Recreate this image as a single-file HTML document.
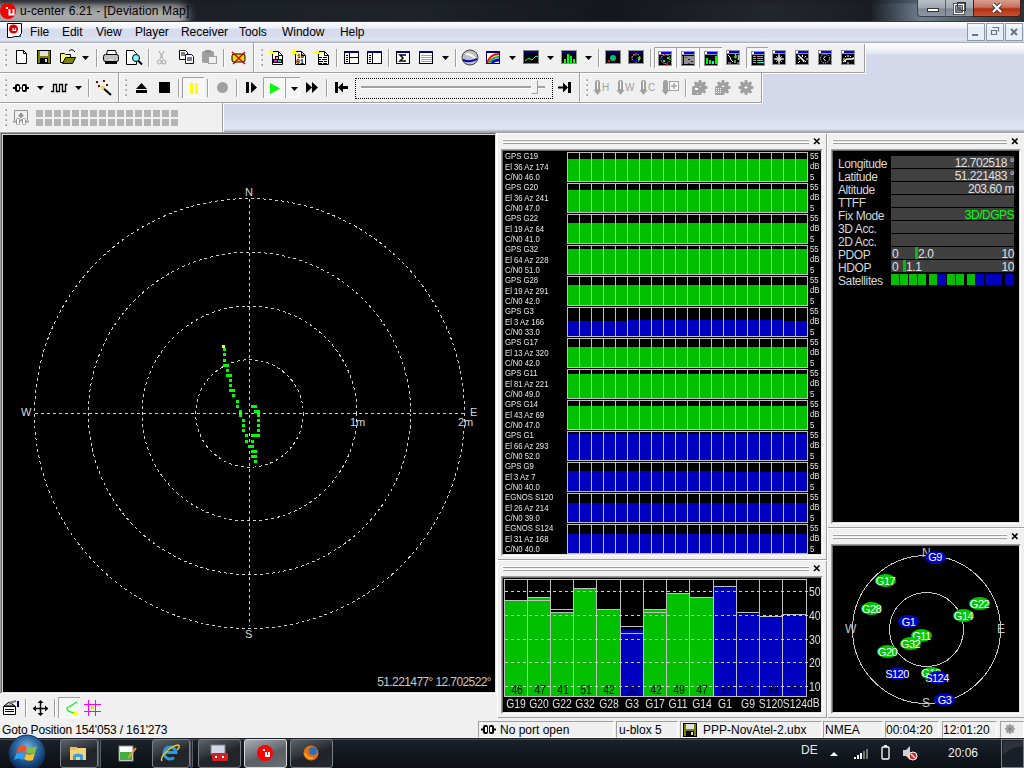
<!DOCTYPE html><html><head><meta charset="utf-8"><style>
*{margin:0;padding:0;box-sizing:border-box}
html,body{width:1024px;height:768px;overflow:hidden;background:#d3d9eb;font-family:"Liberation Sans",sans-serif;position:relative}
.a{position:absolute}
svg{position:absolute;left:0;top:0;overflow:visible}
</style></head><body>
<div class="a" style="left:0;top:0;width:1024px;height:22px;overflow:hidden;background:linear-gradient(90deg,#1a1e24 0%,#1e2329 40%,#14181e 60%,#22272d 75%,#1a1e24 85%,#6f7f90 90%,#2a3038 100%)">
<div class="a" style="left:-20px;top:4px;width:208px;height:24px;border-radius:12px;background:#a8a8a8;filter:blur(5px)"></div>
<div class="a" style="left:0;top:0;width:1024px;height:3px;background:rgba(20,24,30,0.35);filter:blur(1px)"></div>
</div>
<div class="a" style="left:0;top:21px;width:1024px;height:1px;background:#3b3b3b"></div>
<svg width="30" height="30"><circle cx="8" cy="11" r="8" fill="#f00000"/><rect x="6" y="7" width="2" height="2" fill="#fff"/><path d="M9.5 9v5.5h4V9" fill="none" stroke="#fff" stroke-width="2"/></svg>
<div class="a" style="left:20px;top:3px;font:12px/16px 'Liberation Sans',sans-serif;color:#000;white-space:nowrap;letter-spacing:0.15px">u-center 6.21 - [Deviation Map]</div>
<div class="a" style="left:917px;top:0;width:57px;height:17px;border:1px solid #3c4048;border-top:none;border-radius:0 0 0 4px;background:linear-gradient(#b9bfc7 0%,#9ea6b0 50%,#7f8994 55%,#8e98a3 100%)"></div>
<div class="a" style="left:945px;top:0;width:1px;height:17px;background:#5a6068"></div>
<div class="a" style="left:973px;top:0;width:48px;height:17px;border:1px solid #3c2020;border-top:none;border-radius:0 0 4px 0;background:linear-gradient(#d9a090 0%,#c87060 45%,#b03010 55%,#c85030 100%)"></div>
<svg width="1024" height="768">
<rect x="927.5" y="8.5" width="11" height="3" fill="#fff" stroke="#333"/>
<rect x="954.5" y="4.5" width="9" height="9" fill="none" stroke="#333" stroke-width="3"/><rect x="954.5" y="4.5" width="9" height="9" fill="none" stroke="#fff" stroke-width="1.4"/>
<rect x="957.5" y="2.5" width="8" height="8" fill="none" stroke="#333" stroke-width="1"/>
<rect x="957" y="7" width="4" height="4" fill="#5a6470"/>
<path d="M993 4l8 8M1001 4l-8 8" stroke="#3a3a3a" stroke-width="4"/><path d="M993 4l8 8M1001 4l-8 8" stroke="#fff" stroke-width="2.2"/>
</svg>
<div class="a" style="left:0;top:22px;width:1024px;height:20px;background:linear-gradient(#fbfcfe 0px,#eef1f8 6px,#d6dbed 7px,#d8ddef 15px,#e0e5f3 18px,#c8ccd8 20px)"></div>
<div class="a" style="left:0;top:42px;width:1024px;height:1px;background:#a9adb5"></div>
<div class="a" style="left:30px;top:24px;font:12px/16px 'Liberation Sans',sans-serif;color:#000;letter-spacing:-0.05px">File</div><div class="a" style="left:62px;top:24px;font:12px/16px 'Liberation Sans',sans-serif;color:#000;letter-spacing:-0.05px">Edit</div><div class="a" style="left:96px;top:24px;font:12px/16px 'Liberation Sans',sans-serif;color:#000;letter-spacing:-0.05px">View</div><div class="a" style="left:135px;top:24px;font:12px/16px 'Liberation Sans',sans-serif;color:#000;letter-spacing:-0.05px">Player</div><div class="a" style="left:181px;top:24px;font:12px/16px 'Liberation Sans',sans-serif;color:#000;letter-spacing:-0.05px">Receiver</div><div class="a" style="left:239px;top:24px;font:12px/16px 'Liberation Sans',sans-serif;color:#000;letter-spacing:-0.05px">Tools</div><div class="a" style="left:282px;top:24px;font:12px/16px 'Liberation Sans',sans-serif;color:#000;letter-spacing:-0.05px">Window</div><div class="a" style="left:340px;top:24px;font:12px/16px 'Liberation Sans',sans-serif;color:#000;letter-spacing:-0.05px">Help</div><svg width="1024" height="768"><path d="M7.5 23.5h14v10l-3 3h-4l-3 1h-4z" fill="#fff" stroke="#000"/><path d="M9 26h11M9 28h11M9 30h11M9 32h11" stroke="#e0e0e0"/><circle cx="13.5" cy="29" r="4.5" fill="#e00000"/><path d="M13 28v2.5h2.5V28" fill="none" stroke="#fff" stroke-width="1.2"/><rect x="19" y="35" width="2" height="2" fill="#008080"/></svg><svg width="1024" height="768">
<g fill="#e6eef8" stroke="#8c9aa8"><rect x="967.5" y="23.5" width="17" height="17"/><rect x="986.5" y="23.5" width="17" height="17"/><rect x="1005.5" y="23.5" width="17" height="17"/></g>
<g fill="#f4f8fc"><rect x="968" y="24" width="16" height="3"/><rect x="987" y="24" width="16" height="3"/><rect x="1006" y="24" width="16" height="3"/></g>
<rect x="972" y="34" width="6" height="2" fill="#6a7480"/>
<path d="M992.5 27.5h6v4M991.5 30.5h5v4h-5z" fill="none" stroke="#6a7480" stroke-width="1.2"/>
<path d="M1011 29l6 6M1017 29l-6 6" stroke="#6a7480" stroke-width="2"/>
</svg><div class="a" style="left:0;top:43px;width:1024px;height:89px;background:linear-gradient(#ffffff 0px,#e6e9f3 10px,#d3d9eb 12px,#d3d9eb 72px,#e0e5f3 86px,#b8bdcc 88px,#a0a0a0 89px)"></div>
<div class="a" style="left:0;top:132px;width:1024px;height:1px;background:#a0a0a0"></div>
<div class="a" style="left:0px;top:43px;width:865px;height:30px;background:#f0f0f0;border-right:1px solid #a0a0a0;border-bottom:1px solid #a0a0a0;box-shadow:1px 1px 0 #fff"></div><div class="a" style="left:0px;top:73px;width:119px;height:30px;background:#f0f0f0;border-right:1px solid #a0a0a0;border-bottom:1px solid #a0a0a0;box-shadow:1px 1px 0 #fff"></div><div class="a" style="left:119px;top:73px;width:643px;height:30px;background:#f0f0f0;border-right:1px solid #a0a0a0;border-bottom:1px solid #a0a0a0;box-shadow:1px 1px 0 #fff"></div><div class="a" style="left:0;top:103px;width:223px;height:28px;background:#f0f0f0;border-right:1px solid #a0a0a0"></div><div class="a" style="left:0;top:131px;width:223px;height:1px;background:#f8f8f8"></div><div class="a" style="left:0px;top:43px;width:865px;height:1px;background:#fff"></div><div class="a" style="left:0px;top:73px;width:762px;height:1px;background:#fff"></div><div class="a" style="left:0px;top:103px;width:222px;height:1px;background:#fff"></div><svg width="1024" height="768"><rect x="4" y="50" width="2" height="2" fill="#fff"/><rect x="5" y="49" width="2" height="2" fill="#a8a8a8"/><rect x="5" y="49" width="1" height="1" fill="#d0d0d0"/><rect x="4" y="55" width="2" height="2" fill="#fff"/><rect x="5" y="54" width="2" height="2" fill="#a8a8a8"/><rect x="5" y="54" width="1" height="1" fill="#d0d0d0"/><rect x="4" y="60" width="2" height="2" fill="#fff"/><rect x="5" y="59" width="2" height="2" fill="#a8a8a8"/><rect x="5" y="59" width="1" height="1" fill="#d0d0d0"/><rect x="4" y="65" width="2" height="2" fill="#fff"/><rect x="5" y="64" width="2" height="2" fill="#a8a8a8"/><rect x="5" y="64" width="1" height="1" fill="#d0d0d0"/><rect x="4" y="68" width="2" height="1" fill="#fff"/><path d="M16.5 50.5h7l3 3v10h-10z" fill="#fff" stroke="#000"/><path d="M23.5 50.5v3h3" fill="none" stroke="#000"/><rect x="37" y="50" width="14" height="14" fill="#000"/><rect x="38" y="51" width="12" height="12" fill="#808000"/><rect x="40" y="51" width="8" height="5" fill="#e0e0e0"/><rect x="40" y="58" width="8" height="5" fill="#000"/><rect x="45" y="59" width="2" height="3" fill="#e0e0e0"/><path d="M60.5 53.5h4l1 1h5v8h-10z" fill="#ffff80" stroke="#000"/><path d="M62.5 63.5l3-6h10l-3 6z" fill="#808000" stroke="#000"/><path d="M69 51q3-3 6 1" fill="none" stroke="#000"/><path d="M82 56h7l-3.5 4z" fill="#000"/><rect x="96" y="49" width="1" height="18" fill="#a0a0a0"/><rect x="97" y="49" width="1" height="18" fill="#fff"/><path d="M107.5 50.5h8l1 4h-10z" fill="#fff" stroke="#000"/><rect x="103.5" y="54.5" width="15" height="7" rx="2" fill="#c0c0c0" stroke="#000"/><rect x="105" y="61" width="12" height="3" fill="#000"/><rect x="109" y="59" width="4" height="1" fill="#ff0"/><path d="M126.5 50.5h7l3 3v11h-10z" fill="#fff" stroke="#000"/><circle cx="136" cy="58" r="3.5" fill="#80ffff" stroke="#000"/><path d="M138 60.5l4 4" stroke="#000" stroke-width="2"/><rect x="148" y="49" width="1" height="18" fill="#a0a0a0"/><rect x="149" y="49" width="1" height="18" fill="#fff"/><path d="M159 51l4 8M164 51l-4 8" stroke="#a0a0a0" fill="none"/><circle cx="159.5" cy="62" r="2" fill="none" stroke="#a0a0a0"/><circle cx="164" cy="62" r="2" fill="none" stroke="#a0a0a0"/><path d="M179.5 50.5h6l2 2v7h-8z" fill="#fff" stroke="#000"/><path d="M185.5 54.5h6l2 2v7h-8z" fill="#fff" stroke="#000080"/><path d="M187 58h5M187 60h5M181 53h4M181 55h4" stroke="#000"/><rect x="202" y="51" width="12" height="12" rx="2" fill="#a0a0a0"/><rect x="205" y="50" width="6" height="3" fill="#909090"/><rect x="208.5" y="56.5" width="8" height="7" fill="#f0f0f0" stroke="#a0a0a0"/><rect x="223" y="49" width="1" height="18" fill="#a0a0a0"/><rect x="224" y="49" width="1" height="18" fill="#fff"/><rect x="232" y="54" width="13" height="8" rx="2" fill="#e0e000" stroke="#000"/><path d="M232 52l13 12M245 52l-12 12" stroke="#e00000" stroke-width="1.5"/><rect x="253" y="43" width="1" height="29" fill="#a0a0a0"/><rect x="254" y="43" width="1" height="29" fill="#fff"/><rect x="260" y="50" width="2" height="2" fill="#fff"/><rect x="261" y="49" width="2" height="2" fill="#a8a8a8"/><rect x="261" y="49" width="1" height="1" fill="#d0d0d0"/><rect x="260" y="55" width="2" height="2" fill="#fff"/><rect x="261" y="54" width="2" height="2" fill="#a8a8a8"/><rect x="261" y="54" width="1" height="1" fill="#d0d0d0"/><rect x="260" y="60" width="2" height="2" fill="#fff"/><rect x="261" y="59" width="2" height="2" fill="#a8a8a8"/><rect x="261" y="59" width="1" height="1" fill="#d0d0d0"/><rect x="260" y="65" width="2" height="2" fill="#fff"/><rect x="261" y="64" width="2" height="2" fill="#a8a8a8"/><rect x="261" y="64" width="1" height="1" fill="#d0d0d0"/><rect x="260" y="68" width="2" height="1" fill="#fff"/><path d="M272.5 51.5h6l4 4v9h-10z" fill="#fff" stroke="#000"/><path d="M278.5 51.5v4h4" fill="none" stroke="#000"/><path d="M269.5 50.5l4 4M273.5 50.5l-4 4M268 52.5h7M271.5 49v7" stroke="#ffff00" stroke-width="1"/><path d="M295.5 51.5h6l4 4v9h-10z" fill="#fff" stroke="#000"/><path d="M301.5 51.5v4h4" fill="none" stroke="#000"/><path d="M292.5 50.5l4 4M296.5 50.5l-4 4M291 52.5h7M294.5 49v7" stroke="#ffff00" stroke-width="1"/><path d="M318.5 51.5h6l4 4v9h-10z" fill="#fff" stroke="#000"/><path d="M324.5 51.5v4h4" fill="none" stroke="#000"/><path d="M315.5 50.5l4 4M319.5 50.5l-4 4M314 52.5h7M317.5 49v7" stroke="#ffff00" stroke-width="1"/><rect x="275.5" y="56.5" width="3" height="3" fill="#e0c000" stroke="#000"/><rect x="273.5" y="59.5" width="4" height="3" fill="#ff00ff" stroke="#000"/><rect x="277.5" y="59.5" width="4" height="3" fill="#00c0c0" stroke="#000"/><text x="297" y="58" font-family="Liberation Mono" font-size="6" font-weight="bold" fill="#000">10</text><text x="296" y="63.5" font-family="Liberation Mono" font-size="6.5" font-weight="bold" fill="#000">01</text><path d="M319 57.5h3M323 57.5h4M319 59.5h2M322 59.5h5M319 61.5h4M324 61.5h3M319 63.5h3M323 63.5h4" stroke="#000"/><rect x="336" y="49" width="1" height="18" fill="#a0a0a0"/><rect x="337" y="49" width="1" height="18" fill="#fff"/><rect x="344.5" y="51.5" width="14" height="12" fill="#fff" stroke="#000"/><rect x="345" y="51" width="14" height="2" fill="#000080"/><path d="M349.5 53v10M349.5 57.5h9" stroke="#000"/><path d="M346 55.5h2M346 57.5h2M346 59.5h2M346 61.5h2" stroke="#000"/><rect x="367.5" y="51.5" width="14" height="12" fill="#fff" stroke="#000"/><rect x="368" y="51" width="14" height="2" fill="#000080"/><path d="M372.5 53v10" stroke="#000"/><path d="M369 55.5h2M369 57.5h2M369 59.5h2M369 61.5h2" stroke="#000"/><rect x="388" y="49" width="1" height="18" fill="#a0a0a0"/><rect x="389" y="49" width="1" height="18" fill="#fff"/><rect x="396.5" y="51.5" width="13" height="12" fill="#fff" stroke="#000"/><rect x="397" y="51" width="13" height="2" fill="#000080"/><path d="M406 55h-6l3 3l-3 3h6" fill="none" stroke="#000" stroke-width="1.5"/><rect x="419.5" y="51.5" width="13" height="12" fill="#fff" stroke="#000"/><rect x="420" y="51" width="13" height="2" fill="#000080"/><path d="M421 55.5h11M421 57.5h11M421 59.5h11M421 61.5h11" stroke="#a0a0a0"/><path d="M442 56h7l-3.5 4z" fill="#000"/><rect x="455" y="49" width="1" height="18" fill="#a0a0a0"/><rect x="456" y="49" width="1" height="18" fill="#fff"/><ellipse cx="470" cy="57.5" rx="8" ry="7.5" fill="#c0c0c0" stroke="#404040"/><path d="M463 60q7 3 14-1" stroke="#0000c0" stroke-width="2" fill="none"/><path d="M466 54q5 0 9 4" stroke="#fff" stroke-width="2" fill="none"/><rect x="486" y="51" width="14" height="13" fill="#000080"/><rect x="487" y="53" width="12" height="10" fill="#fff"/><path d="M487 63q3-9 12-9" stroke="#ff0000" stroke-width="2" fill="none"/><path d="M489 63q3-6 10-6" stroke="#00c000" stroke-width="2" fill="none"/><path d="M492 63q2-3 7-3" stroke="#0000ff" stroke-width="3" fill="none"/><path d="M509 56h7l-3.5 4z" fill="#000"/><rect x="523" y="50" width="16" height="14" fill="#808080"/><rect x="524" y="51" width="14" height="12" fill="#000"/><rect x="524" y="51" width="14" height="2" fill="#000080"/><path d="M525 61l4-3l3 2l4-4l2 1" stroke="#00ff80" fill="none"/><path d="M547 56h7l-3.5 4z" fill="#000"/><rect x="561" y="50" width="16" height="14" fill="#909090"/><rect x="562" y="51" width="14" height="12" fill="#000"/><rect x="562" y="51" width="14" height="2" fill="#000080"/><rect x="564" y="59" width="2" height="4" fill="#00ff00"/><rect x="567" y="54" width="2" height="9" fill="#00ff00"/><rect x="570" y="56" width="2" height="7" fill="#00ff00"/><rect x="573" y="59" width="2" height="4" fill="#00ff00"/><path d="M585 56h7l-3.5 4z" fill="#000"/><rect x="598" y="49" width="1" height="18" fill="#a0a0a0"/><rect x="599" y="49" width="1" height="18" fill="#fff"/><rect x="605" y="50" width="16" height="14" fill="#909090"/><rect x="606" y="51" width="14" height="12" fill="#000"/><rect x="606" y="51" width="14" height="2" fill="#000080"/><circle cx="613" cy="58" r="3" fill="#00c080"/><rect x="608" y="60" width="2" height="2" fill="#ff0000"/><rect x="628" y="50" width="16" height="14" fill="#909090"/><rect x="629" y="51" width="14" height="12" fill="#000"/><rect x="629" y="51" width="14" height="2" fill="#000080"/><circle cx="636" cy="58" r="4" fill="none" stroke="#fff" stroke-dasharray="1.5 1"/><rect x="634" y="54" width="2" height="2" fill="#f00"/><rect x="633" y="60" width="4" height="2" fill="#00f"/><rect x="638" y="57" width="2" height="3" fill="#0f0"/><rect x="650" y="49" width="1" height="18" fill="#a0a0a0"/><rect x="651" y="49" width="1" height="18" fill="#fff"/><rect x="654.5" y="47.5" width="21" height="20" fill="#f6f6f6" stroke="#fff"/><path d="M654.5 68V47.5H676" fill="none" stroke="#a0a0a0"/><rect x="676.5" y="47.5" width="22" height="20" fill="#f6f6f6" stroke="#fff"/><path d="M676.5 68V47.5H699" fill="none" stroke="#a0a0a0"/><rect x="699.5" y="47.5" width="22" height="20" fill="#f6f6f6" stroke="#fff"/><path d="M699.5 68V47.5H722" fill="none" stroke="#a0a0a0"/><rect x="658" y="51" width="14" height="15" fill="#909090"/><rect x="659" y="52" width="12" height="13" fill="#000"/><rect x="659" y="52" width="2" height="2" fill="#fff"/><rect x="661" y="52" width="10" height="2" fill="#0000ff"/><rect x="659" y="54" width="12" height="1" fill="#909090"/><circle cx="665.5" cy="59" r="4.5" fill="none" stroke="#fff" stroke-dasharray="1 1"/><rect x="664" y="54" width="2" height="2" fill="#f00"/><rect x="666" y="63" width="2" height="2" fill="#f00"/><rect x="661" y="58" width="2" height="2" fill="#00f"/><rect x="667" y="57" width="2" height="2" fill="#0f0"/><rect x="663" y="60" width="2" height="2" fill="#0f0"/><rect x="681" y="51" width="14" height="15" fill="#909090"/><rect x="682" y="52" width="12" height="13" fill="#000"/><rect x="682" y="52" width="2" height="2" fill="#fff"/><rect x="684" y="52" width="10" height="2" fill="#0000ff"/><rect x="682" y="54" width="12" height="1" fill="#909090"/><rect x="684" y="56" width="10" height="8" fill="#909090"/><path d="M682 57h1M682 59h1M682 61h1M682 63h1" stroke="#fff"/><rect x="685" y="57" width="2" height="1" fill="#f00"/><rect x="688" y="57" width="2" height="1" fill="#0f0"/><rect x="691" y="57" width="2" height="1" fill="#0f0"/><rect x="685" y="59" width="2" height="1" fill="#0f0"/><rect x="688" y="59" width="2" height="1" fill="#00f"/><rect x="691" y="59" width="2" height="1" fill="#0f0"/><rect x="685" y="61" width="2" height="1" fill="#0f0"/><rect x="688" y="61" width="2" height="1" fill="#0f0"/><rect x="691" y="61" width="2" height="1" fill="#00f"/><rect x="688" y="63" width="2" height="1" fill="#f00"/><rect x="704" y="51" width="14" height="15" fill="#909090"/><rect x="705" y="52" width="12" height="13" fill="#000"/><rect x="705" y="52" width="2" height="2" fill="#fff"/><rect x="707" y="52" width="10" height="2" fill="#0000ff"/><rect x="705" y="54" width="12" height="1" fill="#909090"/><rect x="706" y="58" width="2" height="6" fill="#00ff00"/><rect x="709" y="60" width="2" height="4" fill="#00ff00"/><rect x="712" y="61" width="2" height="3" fill="#00ffff"/><rect x="715" y="56" width="2" height="8" fill="#00ff00"/><rect x="726" y="50" width="14" height="15" fill="#909090"/><rect x="727" y="51" width="12" height="13" fill="#000"/><rect x="727" y="51" width="2" height="2" fill="#fff"/><rect x="729" y="51" width="10" height="2" fill="#0000ff"/><rect x="727" y="53" width="12" height="1" fill="#909090"/><path d="M728 55l2 2l1 3l2 2M735 54l1 2M738 55l1 2l-1 3" stroke="#fff" fill="none"/><path d="M734 57h3M735.5 55.5v3" stroke="#0f0" stroke-width="1.5"/><path d="M735 60v3" stroke="#fff"/><path d="M728 63h3M737 63h3" stroke="#c0c0c0"/><rect x="746.5" y="47.5" width="21" height="20" fill="#f6f6f6" stroke="#fff"/><path d="M746.5 68V47.5H768" fill="none" stroke="#a0a0a0"/><rect x="751" y="51" width="14" height="15" fill="#909090"/><rect x="752" y="52" width="12" height="13" fill="#000"/><rect x="752" y="52" width="2" height="2" fill="#fff"/><rect x="754" y="52" width="10" height="2" fill="#0000ff"/><rect x="752" y="54" width="12" height="1" fill="#909090"/><path d="M753 56.5h3M757 56.5h6M753 58.5h3M757 58.5h6M753 60.5h3M757 60.5h6M753 62.5h3" stroke="#a0a0a0"/><path d="M757 62.5h3" stroke="#00ff00"/><path d="M760 62.5h4" stroke="#00ffff"/><rect x="772" y="50" width="14" height="15" fill="#909090"/><rect x="773" y="51" width="12" height="13" fill="#000"/><rect x="773" y="51" width="2" height="2" fill="#fff"/><rect x="775" y="51" width="10" height="2" fill="#0000ff"/><rect x="773" y="53" width="12" height="1" fill="#909090"/><path d="M779 54l1 4l4 1l-4 1l-1 4l-1-4l-4-1l4-1z" fill="#c0c0c0" stroke="#e0e0e0" stroke-width="0.7"/><path d="M776 56l6 6M782 56l-6 6" stroke="#e0e0e0" stroke-width="0.8"/><rect x="795" y="50" width="14" height="15" fill="#909090"/><rect x="796" y="51" width="12" height="13" fill="#000"/><rect x="796" y="51" width="2" height="2" fill="#fff"/><rect x="798" y="51" width="10" height="2" fill="#0000ff"/><rect x="796" y="53" width="12" height="1" fill="#909090"/><path d="M798 55l5 5l1 2" stroke="#fff" stroke-width="1.5" fill="none"/><path d="M802.5 55v2M806 56l-1.5 1.5M806 59h2M806 62l-1.5-1.5M798 59h2M798 63l2-2" stroke="#fff"/><rect x="818" y="50" width="14" height="15" fill="#909090"/><rect x="819" y="51" width="12" height="13" fill="#000"/><rect x="819" y="51" width="2" height="2" fill="#fff"/><rect x="821" y="51" width="10" height="2" fill="#0000ff"/><rect x="819" y="53" width="12" height="1" fill="#909090"/><circle cx="825" cy="58.5" r="4.5" fill="none" stroke="#fff" stroke-dasharray="1 1"/><path d="M825.5 56l-2 2.5l2 2.5" stroke="#fff" fill="none"/><rect x="841" y="50" width="14" height="15" fill="#909090"/><rect x="842" y="51" width="12" height="13" fill="#000"/><rect x="842" y="51" width="2" height="2" fill="#fff"/><rect x="844" y="51" width="10" height="2" fill="#0000ff"/><rect x="842" y="53" width="12" height="1" fill="#909090"/><path d="M843 62l4-3h5l2-1" stroke="#fff" stroke-width="1.5" fill="none"/><path d="M848 55v2M845 56l1 1M851 56l-1 1M843 59h2M848 62v2M845 62l1-1" stroke="#fff"/><rect x="4" y="80" width="2" height="2" fill="#fff"/><rect x="5" y="79" width="2" height="2" fill="#a8a8a8"/><rect x="5" y="79" width="1" height="1" fill="#d0d0d0"/><rect x="4" y="85" width="2" height="2" fill="#fff"/><rect x="5" y="84" width="2" height="2" fill="#a8a8a8"/><rect x="5" y="84" width="1" height="1" fill="#d0d0d0"/><rect x="4" y="90" width="2" height="2" fill="#fff"/><rect x="5" y="89" width="2" height="2" fill="#a8a8a8"/><rect x="5" y="89" width="1" height="1" fill="#d0d0d0"/><rect x="4" y="95" width="2" height="2" fill="#fff"/><rect x="5" y="94" width="2" height="2" fill="#a8a8a8"/><rect x="5" y="94" width="1" height="1" fill="#d0d0d0"/><rect x="4" y="98" width="2" height="1" fill="#fff"/><path d="M13 88h2M27 88h2" stroke="#000" stroke-width="2"/><rect x="15" y="84" width="5" height="8" rx="2" fill="#000"/><rect x="22" y="84" width="5" height="8" rx="2" fill="#000"/><rect x="17" y="86" width="2" height="4" fill="#fff"/><rect x="23" y="86" width="2" height="4" fill="#fff"/><path d="M20 88h2" stroke="#000"/><path d="M37 86h7l-3.5 4z" fill="#000"/><path d="M51 91.5h2.5v-7h3v7h3v-7h3v7h3v-7h2" fill="none" stroke="#000" stroke-width="1.3"/><path d="M75 86h7l-3.5 4z" fill="#000"/><rect x="88" y="79" width="1" height="18" fill="#a0a0a0"/><rect x="89" y="79" width="1" height="18" fill="#fff"/><path d="M102 87l9 8" stroke="#000" stroke-width="2"/><path d="M102 87l2 2" stroke="#ff0" stroke-width="2"/><rect x="96" y="81" width="2" height="2" fill="#800000"/><rect x="103" y="80" width="2" height="2" fill="#800000"/><rect x="98" y="85" width="2" height="2" fill="#800000"/><rect x="106" y="84" width="2" height="2" fill="#800000"/><rect x="118" y="73" width="1" height="29" fill="#a0a0a0"/><rect x="119" y="73" width="1" height="29" fill="#fff"/><rect x="124" y="80" width="2" height="2" fill="#fff"/><rect x="125" y="79" width="2" height="2" fill="#a8a8a8"/><rect x="125" y="79" width="1" height="1" fill="#d0d0d0"/><rect x="124" y="85" width="2" height="2" fill="#fff"/><rect x="125" y="84" width="2" height="2" fill="#a8a8a8"/><rect x="125" y="84" width="1" height="1" fill="#d0d0d0"/><rect x="124" y="90" width="2" height="2" fill="#fff"/><rect x="125" y="89" width="2" height="2" fill="#a8a8a8"/><rect x="125" y="89" width="1" height="1" fill="#d0d0d0"/><rect x="124" y="95" width="2" height="2" fill="#fff"/><rect x="125" y="94" width="2" height="2" fill="#a8a8a8"/><rect x="125" y="94" width="1" height="1" fill="#d0d0d0"/><rect x="124" y="98" width="2" height="1" fill="#fff"/><path d="M136 89l5.5-6l5.5 6z" fill="#000"/><rect x="136" y="90" width="11" height="3" fill="#000"/><rect x="159" y="82" width="11" height="11" fill="#000"/><rect x="178" y="79" width="1" height="18" fill="#a0a0a0"/><rect x="179" y="79" width="1" height="18" fill="#fff"/><rect x="182.5" y="77.5" width="21" height="20" fill="#f6f6f6" stroke="#fff"/><path d="M182.5 98V77.5H204" fill="none" stroke="#a0a0a0"/><rect x="190" y="83" width="3" height="11" fill="#ffff00"/><rect x="195" y="83" width="3" height="11" fill="#ffff00"/><rect x="207" y="79" width="1" height="18" fill="#a0a0a0"/><rect x="208" y="79" width="1" height="18" fill="#fff"/><circle cx="222.5" cy="87.5" r="5.5" fill="#a0a0a0"/><rect x="236" y="79" width="1" height="18" fill="#a0a0a0"/><rect x="237" y="79" width="1" height="18" fill="#fff"/><rect x="246" y="82" width="3" height="11" fill="#000"/><path d="M251 82l6 5.5l-6 5.5z" fill="#000"/><rect x="263.5" y="77.5" width="21" height="20" fill="#f6f6f6" stroke="#fff"/><path d="M263.5 98V77.5H285" fill="none" stroke="#a0a0a0"/><rect x="285.5" y="77.5" width="14" height="20" fill="#f6f6f6" stroke="#fff"/><path d="M285.5 98V77.5H300" fill="none" stroke="#a0a0a0"/><path d="M270 83l10 5.5l-10 5.5z" fill="#00ff00"/><path d="M291 87h7l-3.5 4z" fill="#000"/><path d="M306 82l6 5.5l-6 5.5zM312 82l6 5.5l-6 5.5z" fill="#000"/><rect x="326" y="79" width="1" height="18" fill="#a0a0a0"/><rect x="327" y="79" width="1" height="18" fill="#fff"/><rect x="335" y="82" width="3" height="11" fill="#000"/><path d="M338 87.5l5-5v3.5h5v3h-5v3.5z" fill="#000"/><rect x="361" y="86" width="184" height="2" fill="#a0a0a0"/><rect x="361" y="88" width="184" height="1" fill="#fff"/><rect x="531.5" y="80.5" width="6" height="13" fill="#f0f0f0" stroke="#a0a0a0"/><path d="M531.5 93.5V80.5h6" stroke="#fff" fill="none"/><path d="M571 82v11h-3zM558 86.5h5v-4l5 5l-5 5v-4h-5z" fill="#000"/><rect x="568" y="82" width="3" height="11" fill="#000"/><rect x="579" y="73" width="1" height="29" fill="#a0a0a0"/><rect x="580" y="73" width="1" height="29" fill="#fff"/><rect x="585" y="80" width="2" height="2" fill="#fff"/><rect x="586" y="79" width="2" height="2" fill="#a8a8a8"/><rect x="586" y="79" width="1" height="1" fill="#d0d0d0"/><rect x="585" y="85" width="2" height="2" fill="#fff"/><rect x="586" y="84" width="2" height="2" fill="#a8a8a8"/><rect x="586" y="84" width="1" height="1" fill="#d0d0d0"/><rect x="585" y="90" width="2" height="2" fill="#fff"/><rect x="586" y="89" width="2" height="2" fill="#a8a8a8"/><rect x="586" y="89" width="1" height="1" fill="#d0d0d0"/><rect x="585" y="95" width="2" height="2" fill="#fff"/><rect x="586" y="94" width="2" height="2" fill="#a8a8a8"/><rect x="586" y="94" width="1" height="1" fill="#d0d0d0"/><rect x="585" y="98" width="2" height="1" fill="#fff"/><rect x="595" y="80" width="5" height="12" rx="2.5" fill="#a0a0a0"/><rect x="597" y="81" width="1" height="8" fill="#fff"/><path d="M593.5 90h8l-4 5z" fill="#a0a0a0"/><text x="602" y="91" font-family="Liberation Sans" font-size="10" fill="#a0a0a0">H</text><rect x="618" y="80" width="5" height="12" rx="2.5" fill="#a0a0a0"/><rect x="620" y="81" width="1" height="8" fill="#fff"/><path d="M616.5 90h8l-4 5z" fill="#a0a0a0"/><text x="625" y="91" font-family="Liberation Sans" font-size="10" fill="#a0a0a0">W</text><rect x="641" y="80" width="5" height="12" rx="2.5" fill="#a0a0a0"/><rect x="643" y="81" width="1" height="8" fill="#fff"/><path d="M639.5 90h8l-4 5z" fill="#a0a0a0"/><text x="648" y="91" font-family="Liberation Sans" font-size="10" fill="#a0a0a0">C</text><rect x="663" y="80" width="5" height="12" rx="2.5" fill="#a0a0a0"/><path d="M661.5 90h8l-4 5z" fill="#a0a0a0"/><rect x="669.5" y="81.5" width="9" height="9" fill="#fff" stroke="#a0a0a0"/><path d="M674 83v6M671 86h6" stroke="#a0a0a0" stroke-width="1.5"/><rect x="685" y="79" width="1" height="18" fill="#a0a0a0"/><rect x="686" y="79" width="1" height="18" fill="#fff"/><circle cx="700" cy="87.5" r="5.5" fill="#a0a0a0"/><rect x="698.5" y="80.0" width="3" height="3.5" rx="1" fill="#a0a0a0" transform="rotate(0 700 87.5)"/><rect x="698.5" y="80.0" width="3" height="3.5" rx="1" fill="#a0a0a0" transform="rotate(45 700 87.5)"/><rect x="698.5" y="80.0" width="3" height="3.5" rx="1" fill="#a0a0a0" transform="rotate(90 700 87.5)"/><rect x="698.5" y="80.0" width="3" height="3.5" rx="1" fill="#a0a0a0" transform="rotate(135 700 87.5)"/><rect x="698.5" y="80.0" width="3" height="3.5" rx="1" fill="#a0a0a0" transform="rotate(180 700 87.5)"/><rect x="698.5" y="80.0" width="3" height="3.5" rx="1" fill="#a0a0a0" transform="rotate(225 700 87.5)"/><rect x="698.5" y="80.0" width="3" height="3.5" rx="1" fill="#a0a0a0" transform="rotate(270 700 87.5)"/><rect x="698.5" y="80.0" width="3" height="3.5" rx="1" fill="#a0a0a0" transform="rotate(315 700 87.5)"/><circle cx="723" cy="87.5" r="5.5" fill="#a0a0a0"/><rect x="721.5" y="80.0" width="3" height="3.5" rx="1" fill="#a0a0a0" transform="rotate(0 723 87.5)"/><rect x="721.5" y="80.0" width="3" height="3.5" rx="1" fill="#a0a0a0" transform="rotate(45 723 87.5)"/><rect x="721.5" y="80.0" width="3" height="3.5" rx="1" fill="#a0a0a0" transform="rotate(90 723 87.5)"/><rect x="721.5" y="80.0" width="3" height="3.5" rx="1" fill="#a0a0a0" transform="rotate(135 723 87.5)"/><rect x="721.5" y="80.0" width="3" height="3.5" rx="1" fill="#a0a0a0" transform="rotate(180 723 87.5)"/><rect x="721.5" y="80.0" width="3" height="3.5" rx="1" fill="#a0a0a0" transform="rotate(225 723 87.5)"/><rect x="721.5" y="80.0" width="3" height="3.5" rx="1" fill="#a0a0a0" transform="rotate(270 723 87.5)"/><rect x="721.5" y="80.0" width="3" height="3.5" rx="1" fill="#a0a0a0" transform="rotate(315 723 87.5)"/><circle cx="746" cy="87.5" r="5.5" fill="#a0a0a0"/><rect x="744.5" y="80.0" width="3" height="3.5" rx="1" fill="#a0a0a0" transform="rotate(0 746 87.5)"/><rect x="744.5" y="80.0" width="3" height="3.5" rx="1" fill="#a0a0a0" transform="rotate(45 746 87.5)"/><rect x="744.5" y="80.0" width="3" height="3.5" rx="1" fill="#a0a0a0" transform="rotate(90 746 87.5)"/><rect x="744.5" y="80.0" width="3" height="3.5" rx="1" fill="#a0a0a0" transform="rotate(135 746 87.5)"/><rect x="744.5" y="80.0" width="3" height="3.5" rx="1" fill="#a0a0a0" transform="rotate(180 746 87.5)"/><rect x="744.5" y="80.0" width="3" height="3.5" rx="1" fill="#a0a0a0" transform="rotate(225 746 87.5)"/><rect x="744.5" y="80.0" width="3" height="3.5" rx="1" fill="#a0a0a0" transform="rotate(270 746 87.5)"/><rect x="744.5" y="80.0" width="3" height="3.5" rx="1" fill="#a0a0a0" transform="rotate(315 746 87.5)"/><rect x="692" y="87" width="8" height="8" fill="#a0a0a0"/><rect x="695" y="88" width="3" height="2" fill="#fff"/><rect x="697" y="93" width="1" height="1" fill="#fff"/><rect x="700" y="86" width="1" height="1" fill="#fff"/><rect x="715" y="87" width="8" height="8" fill="#a0a0a0"/><path d="M716 88.5h6M716 90.5h6M716 92.5h6" stroke="#fff" stroke-dasharray="1 1"/><path d="M723 85l1.5 2h-3z" fill="#fff"/><path d="M746 86v3M744.5 87.5h3" stroke="#fff"/><rect x="761" y="73" width="1" height="29" fill="#a0a0a0"/><rect x="762" y="73" width="1" height="29" fill="#fff"/><rect x="4" y="110" width="2" height="2" fill="#fff"/><rect x="5" y="109" width="2" height="2" fill="#a8a8a8"/><rect x="5" y="109" width="1" height="1" fill="#d0d0d0"/><rect x="4" y="115" width="2" height="2" fill="#fff"/><rect x="5" y="114" width="2" height="2" fill="#a8a8a8"/><rect x="5" y="114" width="1" height="1" fill="#d0d0d0"/><rect x="4" y="120" width="2" height="2" fill="#fff"/><rect x="5" y="119" width="2" height="2" fill="#a8a8a8"/><rect x="5" y="119" width="1" height="1" fill="#d0d0d0"/><rect x="4" y="125" width="2" height="2" fill="#fff"/><rect x="5" y="124" width="2" height="2" fill="#a8a8a8"/><rect x="5" y="124" width="1" height="1" fill="#d0d0d0"/><rect x="4" y="128" width="2" height="1" fill="#fff"/><path d="M14.5 120v-9.5h13v9.5" fill="none" stroke="#909090"/><path d="M21 113v5M18.5 115.5h5" stroke="#909090" stroke-width="2"/><path d="M13 121.5h3M26 121.5h3M19 121.5l3-2" stroke="#a0a0a0" stroke-width="2"/><rect x="16.5" y="118.5" width="3" height="6" rx="1" fill="#fff" stroke="#909090"/><rect x="22.5" y="118.5" width="3" height="6" rx="1" fill="#fff" stroke="#909090"/><rect x="36" y="110" width="7" height="7" fill="#b4b4b4"/><rect x="45" y="110" width="7" height="7" fill="#b4b4b4"/><rect x="54" y="110" width="7" height="7" fill="#b4b4b4"/><rect x="63" y="110" width="7" height="7" fill="#b4b4b4"/><rect x="72" y="110" width="7" height="7" fill="#b4b4b4"/><rect x="81" y="110" width="7" height="7" fill="#b4b4b4"/><rect x="90" y="110" width="7" height="7" fill="#b4b4b4"/><rect x="99" y="110" width="7" height="7" fill="#b4b4b4"/><rect x="108" y="110" width="7" height="7" fill="#b4b4b4"/><rect x="117" y="110" width="7" height="7" fill="#b4b4b4"/><rect x="126" y="110" width="7" height="7" fill="#b4b4b4"/><rect x="135" y="110" width="7" height="7" fill="#b4b4b4"/><rect x="144" y="110" width="7" height="7" fill="#b4b4b4"/><rect x="153" y="110" width="7" height="7" fill="#b4b4b4"/><rect x="162" y="110" width="7" height="7" fill="#b4b4b4"/><rect x="171" y="110" width="7" height="7" fill="#b4b4b4"/><rect x="36" y="119" width="7" height="7" fill="#b4b4b4"/><rect x="45" y="119" width="7" height="7" fill="#b4b4b4"/><rect x="54" y="119" width="7" height="7" fill="#b4b4b4"/><rect x="63" y="119" width="7" height="7" fill="#b4b4b4"/><rect x="72" y="119" width="7" height="7" fill="#b4b4b4"/><rect x="81" y="119" width="7" height="7" fill="#b4b4b4"/><rect x="90" y="119" width="7" height="7" fill="#b4b4b4"/><rect x="99" y="119" width="7" height="7" fill="#b4b4b4"/><rect x="108" y="119" width="7" height="7" fill="#b4b4b4"/><rect x="117" y="119" width="7" height="7" fill="#b4b4b4"/><rect x="126" y="119" width="7" height="7" fill="#b4b4b4"/><rect x="135" y="119" width="7" height="7" fill="#b4b4b4"/><rect x="144" y="119" width="7" height="7" fill="#b4b4b4"/><rect x="153" y="119" width="7" height="7" fill="#b4b4b4"/><rect x="162" y="119" width="7" height="7" fill="#b4b4b4"/><rect x="171" y="119" width="7" height="7" fill="#b4b4b4"/><rect x="222" y="103" width="1" height="29" fill="#a0a0a0"/><rect x="223" y="103" width="1" height="29" fill="#fff"/></svg><div class="a" style="left:355px;top:78px;width:198px;height:21px;border:1px dotted #000"></div><div class="a" style="left:0;top:133px;width:497px;height:585px;background:#f0f0f0"></div>
<div class="a" style="left:0;top:132px;width:497px;height:562px;border-top:1px solid #a0a0a0;border-left:1px solid #a0a0a0;border-right:1px solid #fff;border-bottom:1px solid #fff"></div>
<div class="a" style="left:1px;top:133px;width:495px;height:560px;border-top:1px solid #696969;border-left:1px solid #696969;border-right:1px solid #e3e3e3;border-bottom:1px solid #e3e3e3;background:#000"></div>
<div class="a" style="left:2px;top:134px;width:1px;height:558px;background:#d4d4d4"></div>
<div class="a" style="left:2px;top:134px;width:493px;height:1px;background:#d4d4d4"></div>
<svg width="1024" height="768" style="left:0;top:0"><g fill="none" stroke="#d0d0d0" stroke-width="1" stroke-dasharray="3 3" shape-rendering="crispEdges"><circle cx="249.5" cy="413.5" r="53.75"/><circle cx="249.5" cy="413.5" r="107.5"/><circle cx="249.5" cy="413.5" r="161.25"/><circle cx="249.5" cy="413.5" r="215.0"/><line x1="34.5" y1="413.5" x2="464.5" y2="413.5"/><line x1="249.5" y1="198.5" x2="249.5" y2="625.5"/></g></svg><div class="a" style="left:245px;top:186px;font:11px/12px 'Liberation Sans',sans-serif;color:#d8d8d8">N</div><div class="a" style="left:21px;top:406px;font:11px/12px 'Liberation Sans',sans-serif;color:#d8d8d8">W</div><div class="a" style="left:470px;top:406px;font:11px/12px 'Liberation Sans',sans-serif;color:#d8d8d8">E</div><div class="a" style="left:245px;top:628px;font:11px/12px 'Liberation Sans',sans-serif;color:#d8d8d8">S</div><div class="a" style="left:350px;top:416px;font:11px/12px 'Liberation Sans',sans-serif;color:#d8d8d8">1m</div><div class="a" style="left:458px;top:416px;font:11px/12px 'Liberation Sans',sans-serif;color:#d8d8d8">2m</div><svg width="1024" height="768"><rect x="223" y="348" width="3" height="3" fill="#00ff00"/><rect x="223" y="353" width="3" height="3" fill="#00ff00"/><rect x="223" y="359" width="3" height="3" fill="#00ff00"/><rect x="223" y="364" width="6" height="3" fill="#00ff00"/><rect x="226" y="369" width="3" height="3" fill="#00ff00"/><rect x="226" y="374" width="6" height="3" fill="#00ff00"/><rect x="229" y="379" width="3" height="3" fill="#00ff00"/><rect x="229" y="384" width="3" height="3" fill="#00ff00"/><rect x="229" y="389" width="6" height="3" fill="#00ff00"/><rect x="232" y="394" width="3" height="3" fill="#00ff00"/><rect x="236" y="400" width="3" height="3" fill="#00ff00"/><rect x="236" y="405" width="3" height="3" fill="#00ff00"/><rect x="239" y="410" width="3" height="3" fill="#00ff00"/><rect x="239" y="414" width="3" height="3" fill="#00ff00"/><rect x="242" y="419" width="3" height="3" fill="#00ff00"/><rect x="242" y="424" width="3" height="3" fill="#00ff00"/><rect x="242" y="429" width="3" height="3" fill="#00ff00"/><rect x="245" y="434" width="3" height="3" fill="#00ff00"/><rect x="245" y="440" width="3" height="3" fill="#00ff00"/><rect x="248" y="445" width="6" height="3" fill="#00ff00"/><rect x="251" y="450" width="6" height="3" fill="#00ff00"/><rect x="251" y="455" width="6" height="3" fill="#00ff00"/><rect x="254" y="460" width="3" height="3" fill="#00ff00"/><rect x="251" y="405" width="6" height="3" fill="#00ff00"/><rect x="254" y="410" width="6" height="3" fill="#00ff00"/><rect x="257" y="414" width="3" height="3" fill="#00ff00"/><rect x="257" y="419" width="3" height="3" fill="#00ff00"/><rect x="257" y="424" width="3" height="3" fill="#00ff00"/><rect x="257" y="429" width="3" height="3" fill="#00ff00"/><rect x="251" y="434" width="9" height="3" fill="#00ff00"/><rect x="251" y="440" width="3" height="3" fill="#00ff00"/><rect x="222" y="345" width="3" height="3" fill="#ffff00"/></svg><div class="a" style="left:291px;top:675px;width:200px;text-align:right;font:12px/14px 'Liberation Sans',sans-serif;color:#c8c8c8;white-space:nowrap;letter-spacing:-0.6px">51.221477° 12.702522°</div><div class="a" style="left:0;top:718px;width:1024px;height:20px;background:#f0f0f0"></div><div class="a" style="left:2px;top:723px;font:12px/14px 'Liberation Sans',sans-serif;color:#000;white-space:nowrap;letter-spacing:-0.15px">Goto Position 154'053 / 161'273</div><div class="a" style="left:478px;top:721px;width:136px;height:17px;border-top:1px solid #a0a0a0;border-left:1px solid #a0a0a0;border-right:1px solid #fff;border-bottom:1px solid #fff"></div><div class="a" style="left:500px;top:723px;font:12px/15px 'Liberation Sans',sans-serif;color:#000;white-space:nowrap">No port open</div><div class="a" style="left:616px;top:721px;width:62px;height:17px;border-top:1px solid #a0a0a0;border-left:1px solid #a0a0a0;border-right:1px solid #fff;border-bottom:1px solid #fff"></div><div class="a" style="left:619px;top:723px;font:12px/15px 'Liberation Sans',sans-serif;color:#000;white-space:nowrap">u-blox 5</div><div class="a" style="left:680px;top:721px;width:142px;height:17px;border-top:1px solid #a0a0a0;border-left:1px solid #a0a0a0;border-right:1px solid #fff;border-bottom:1px solid #fff"></div><div class="a" style="left:703px;top:723px;font:12px/15px 'Liberation Sans',sans-serif;color:#000;white-space:nowrap">PPP-NovAtel-2.ubx</div><div class="a" style="left:823px;top:721px;width:60px;height:17px;border-top:1px solid #a0a0a0;border-left:1px solid #a0a0a0;border-right:1px solid #fff;border-bottom:1px solid #fff"></div><div class="a" style="left:825px;top:723px;font:12px/15px 'Liberation Sans',sans-serif;color:#000;white-space:nowrap">NMEA</div><div class="a" style="left:885px;top:721px;width:54px;height:17px;border-top:1px solid #a0a0a0;border-left:1px solid #a0a0a0;border-right:1px solid #fff;border-bottom:1px solid #fff"></div><div class="a" style="left:886px;top:723px;font:12px/15px 'Liberation Sans',sans-serif;color:#000;white-space:nowrap">00:04:20</div><div class="a" style="left:942px;top:721px;width:55px;height:17px;border-top:1px solid #a0a0a0;border-left:1px solid #a0a0a0;border-right:1px solid #fff;border-bottom:1px solid #fff"></div><div class="a" style="left:943px;top:723px;font:12px/15px 'Liberation Sans',sans-serif;color:#000;white-space:nowrap">12:01:20</div><div class="a" style="left:1000px;top:721px;width:24px;height:17px;border-top:1px solid #a0a0a0;border-left:1px solid #a0a0a0;border-right:1px solid #fff;border-bottom:1px solid #fff"></div><div class="a" style="left:497px;top:133px;width:527px;height:585px;background:#f0f0f0"></div><div class="a" style="left:497px;top:133px;width:330px;height:1px;background:#fff"></div><div class="a" style="left:497px;top:133px;width:1px;height:426px;background:#fff"></div><div class="a" style="left:826px;top:134px;width:1px;height:425px;background:#a0a0a0"></div><div class="a" style="left:498px;top:559px;width:329px;height:1px;background:#a0a0a0"></div><div class="a" style="left:497px;top:560px;width:330px;height:1px;background:#fff"></div><div class="a" style="left:497px;top:560px;width:1px;height:158px;background:#fff"></div><div class="a" style="left:826px;top:561px;width:1px;height:157px;background:#a0a0a0"></div><div class="a" style="left:498px;top:717px;width:329px;height:1px;background:#a0a0a0"></div><div class="a" style="left:827px;top:133px;width:197px;height:1px;background:#fff"></div><div class="a" style="left:827px;top:133px;width:1px;height:395px;background:#fff"></div><div class="a" style="left:828px;top:527px;width:196px;height:1px;background:#a0a0a0"></div><div class="a" style="left:827px;top:528px;width:197px;height:1px;background:#fff"></div><div class="a" style="left:827px;top:528px;width:1px;height:190px;background:#fff"></div><div class="a" style="left:828px;top:717px;width:196px;height:1px;background:#a0a0a0"></div><div class="a" style="left:502px;top:139px;width:307px;height:1px;background:#fff"></div><div class="a" style="left:502px;top:140px;width:307px;height:1px;background:#a0a0a0"></div><div class="a" style="left:502px;top:142px;width:307px;height:1px;background:#fff"></div><div class="a" style="left:502px;top:143px;width:307px;height:1px;background:#a0a0a0"></div><div class="a" style="left:502px;top:139px;width:1px;height:5px;background:#fff"></div><svg width="8" height="7" style="left:813px;top:138px"><path d="M1 0.5L6.5 6M6.5 0.5L1 6" stroke="#000" stroke-width="1.6"/></svg><div class="a" style="left:502px;top:566px;width:307px;height:1px;background:#fff"></div><div class="a" style="left:502px;top:567px;width:307px;height:1px;background:#a0a0a0"></div><div class="a" style="left:502px;top:569px;width:307px;height:1px;background:#fff"></div><div class="a" style="left:502px;top:570px;width:307px;height:1px;background:#a0a0a0"></div><div class="a" style="left:502px;top:566px;width:1px;height:5px;background:#fff"></div><svg width="8" height="7" style="left:813px;top:565px"><path d="M1 0.5L6.5 6M6.5 0.5L1 6" stroke="#000" stroke-width="1.6"/></svg><div class="a" style="left:832px;top:139px;width:175px;height:1px;background:#fff"></div><div class="a" style="left:832px;top:140px;width:175px;height:1px;background:#a0a0a0"></div><div class="a" style="left:832px;top:142px;width:175px;height:1px;background:#fff"></div><div class="a" style="left:832px;top:143px;width:175px;height:1px;background:#a0a0a0"></div><div class="a" style="left:832px;top:139px;width:1px;height:5px;background:#fff"></div><svg width="8" height="7" style="left:1011px;top:138px"><path d="M1 0.5L6.5 6M6.5 0.5L1 6" stroke="#000" stroke-width="1.6"/></svg><div class="a" style="left:832px;top:534px;width:175px;height:1px;background:#fff"></div><div class="a" style="left:832px;top:535px;width:175px;height:1px;background:#a0a0a0"></div><div class="a" style="left:832px;top:537px;width:175px;height:1px;background:#fff"></div><div class="a" style="left:832px;top:538px;width:175px;height:1px;background:#a0a0a0"></div><div class="a" style="left:832px;top:534px;width:1px;height:5px;background:#fff"></div><svg width="8" height="7" style="left:1011px;top:533px"><path d="M1 0.5L6.5 6M6.5 0.5L1 6" stroke="#000" stroke-width="1.6"/></svg><div class="a" style="left:501px;top:149px;width:322px;height:407px;border-top:1px solid #a0a0a0;border-left:1px solid #a0a0a0;border-right:1px solid #fff;border-bottom:1px solid #fff"></div><div class="a" style="left:502px;top:150px;width:320px;height:405px;border-top:1px solid #696969;border-left:1px solid #696969;border-right:1px solid #e3e3e3;border-bottom:1px solid #e3e3e3;background:#000"></div><div class="a" style="left:501px;top:576px;width:322px;height:138px;border-top:1px solid #a0a0a0;border-left:1px solid #a0a0a0;border-right:1px solid #fff;border-bottom:1px solid #fff"></div><div class="a" style="left:502px;top:577px;width:320px;height:136px;border-top:1px solid #696969;border-left:1px solid #696969;border-right:1px solid #e3e3e3;border-bottom:1px solid #e3e3e3;background:#000"></div><div class="a" style="left:831px;top:149px;width:190px;height:375px;border-top:1px solid #a0a0a0;border-left:1px solid #a0a0a0;border-right:1px solid #fff;border-bottom:1px solid #fff"></div><div class="a" style="left:832px;top:150px;width:188px;height:373px;border-top:1px solid #696969;border-left:1px solid #696969;border-right:1px solid #e3e3e3;border-bottom:1px solid #e3e3e3;background:#000"></div><div class="a" style="left:831px;top:544px;width:190px;height:170px;border-top:1px solid #a0a0a0;border-left:1px solid #a0a0a0;border-right:1px solid #fff;border-bottom:1px solid #fff"></div><div class="a" style="left:832px;top:545px;width:188px;height:168px;border-top:1px solid #696969;border-left:1px solid #696969;border-right:1px solid #e3e3e3;border-bottom:1px solid #e3e3e3;background:#000"></div><svg width="1024" height="768"><rect x="567" y="152" width="241" height="30" fill="#c0c0c0"/><rect x="568" y="153" width="11" height="28" fill="#000"/><rect x="568" y="159" width="11" height="22" fill="#00c000"/><rect x="580" y="153" width="11" height="28" fill="#000"/><rect x="580" y="159" width="11" height="22" fill="#00c000"/><rect x="592" y="153" width="11" height="28" fill="#000"/><rect x="592" y="159" width="11" height="22" fill="#00c000"/><rect x="604" y="153" width="11" height="28" fill="#000"/><rect x="604" y="159" width="11" height="22" fill="#00c000"/><rect x="616" y="153" width="11" height="28" fill="#000"/><rect x="616" y="159" width="11" height="22" fill="#00c000"/><rect x="628" y="153" width="11" height="28" fill="#000"/><rect x="628" y="159" width="11" height="22" fill="#00c000"/><rect x="640" y="153" width="11" height="28" fill="#000"/><rect x="640" y="159" width="11" height="22" fill="#00c000"/><rect x="652" y="153" width="11" height="28" fill="#000"/><rect x="652" y="159" width="11" height="22" fill="#00c000"/><rect x="664" y="153" width="11" height="28" fill="#000"/><rect x="664" y="159" width="11" height="22" fill="#00c000"/><rect x="676" y="153" width="11" height="28" fill="#000"/><rect x="676" y="159" width="11" height="22" fill="#00c000"/><rect x="688" y="153" width="11" height="28" fill="#000"/><rect x="688" y="159" width="11" height="22" fill="#00c000"/><rect x="700" y="153" width="11" height="28" fill="#000"/><rect x="700" y="159" width="11" height="22" fill="#00c000"/><rect x="712" y="153" width="11" height="28" fill="#000"/><rect x="712" y="159" width="11" height="22" fill="#00c000"/><rect x="724" y="153" width="11" height="28" fill="#000"/><rect x="724" y="159" width="11" height="22" fill="#00c000"/><rect x="736" y="153" width="11" height="28" fill="#000"/><rect x="736" y="159" width="11" height="22" fill="#00c000"/><rect x="748" y="153" width="11" height="28" fill="#000"/><rect x="748" y="159" width="11" height="22" fill="#00c000"/><rect x="760" y="153" width="11" height="28" fill="#000"/><rect x="760" y="159" width="11" height="22" fill="#00c000"/><rect x="772" y="153" width="11" height="28" fill="#000"/><rect x="772" y="159" width="11" height="22" fill="#00c000"/><rect x="784" y="153" width="11" height="28" fill="#000"/><rect x="784" y="159" width="11" height="22" fill="#00c000"/><rect x="796" y="153" width="11" height="28" fill="#000"/><rect x="796" y="159" width="11" height="22" fill="#00c000"/><rect x="567" y="183" width="241" height="30" fill="#c0c0c0"/><rect x="568" y="184" width="11" height="28" fill="#000"/><rect x="568" y="190" width="11" height="22" fill="#00c000"/><rect x="580" y="184" width="11" height="28" fill="#000"/><rect x="580" y="190" width="11" height="22" fill="#00c000"/><rect x="592" y="184" width="11" height="28" fill="#000"/><rect x="592" y="190" width="11" height="22" fill="#00c000"/><rect x="604" y="184" width="11" height="28" fill="#000"/><rect x="604" y="190" width="11" height="22" fill="#00c000"/><rect x="616" y="184" width="11" height="28" fill="#000"/><rect x="616" y="190" width="11" height="22" fill="#00c000"/><rect x="628" y="184" width="11" height="28" fill="#000"/><rect x="628" y="190" width="11" height="22" fill="#00c000"/><rect x="640" y="184" width="11" height="28" fill="#000"/><rect x="640" y="190" width="11" height="22" fill="#00c000"/><rect x="652" y="184" width="11" height="28" fill="#000"/><rect x="652" y="190" width="11" height="22" fill="#00c000"/><rect x="664" y="184" width="11" height="28" fill="#000"/><rect x="664" y="190" width="11" height="22" fill="#00c000"/><rect x="676" y="184" width="11" height="28" fill="#000"/><rect x="676" y="190" width="11" height="22" fill="#00c000"/><rect x="688" y="184" width="11" height="28" fill="#000"/><rect x="688" y="190" width="11" height="22" fill="#00c000"/><rect x="700" y="184" width="11" height="28" fill="#000"/><rect x="700" y="189" width="11" height="23" fill="#00c000"/><rect x="712" y="184" width="11" height="28" fill="#000"/><rect x="712" y="189" width="11" height="23" fill="#00c000"/><rect x="724" y="184" width="11" height="28" fill="#000"/><rect x="724" y="189" width="11" height="23" fill="#00c000"/><rect x="736" y="184" width="11" height="28" fill="#000"/><rect x="736" y="189" width="11" height="23" fill="#00c000"/><rect x="748" y="184" width="11" height="28" fill="#000"/><rect x="748" y="189" width="11" height="23" fill="#00c000"/><rect x="760" y="184" width="11" height="28" fill="#000"/><rect x="760" y="189" width="11" height="23" fill="#00c000"/><rect x="772" y="184" width="11" height="28" fill="#000"/><rect x="772" y="189" width="11" height="23" fill="#00c000"/><rect x="784" y="184" width="11" height="28" fill="#000"/><rect x="784" y="189" width="11" height="23" fill="#00c000"/><rect x="796" y="184" width="11" height="28" fill="#000"/><rect x="796" y="189" width="11" height="23" fill="#00c000"/><rect x="567" y="214" width="241" height="30" fill="#c0c0c0"/><rect x="568" y="215" width="11" height="28" fill="#000"/><rect x="568" y="223" width="11" height="20" fill="#00c000"/><rect x="580" y="215" width="11" height="28" fill="#000"/><rect x="580" y="223" width="11" height="20" fill="#00c000"/><rect x="592" y="215" width="11" height="28" fill="#000"/><rect x="592" y="223" width="11" height="20" fill="#00c000"/><rect x="604" y="215" width="11" height="28" fill="#000"/><rect x="604" y="223" width="11" height="20" fill="#00c000"/><rect x="616" y="215" width="11" height="28" fill="#000"/><rect x="616" y="223" width="11" height="20" fill="#00c000"/><rect x="628" y="215" width="11" height="28" fill="#000"/><rect x="628" y="223" width="11" height="20" fill="#00c000"/><rect x="640" y="215" width="11" height="28" fill="#000"/><rect x="640" y="223" width="11" height="20" fill="#00c000"/><rect x="652" y="215" width="11" height="28" fill="#000"/><rect x="652" y="223" width="11" height="20" fill="#00c000"/><rect x="664" y="215" width="11" height="28" fill="#000"/><rect x="664" y="223" width="11" height="20" fill="#00c000"/><rect x="676" y="215" width="11" height="28" fill="#000"/><rect x="676" y="223" width="11" height="20" fill="#00c000"/><rect x="688" y="215" width="11" height="28" fill="#000"/><rect x="688" y="223" width="11" height="20" fill="#00c000"/><rect x="700" y="215" width="11" height="28" fill="#000"/><rect x="700" y="223" width="11" height="20" fill="#00c000"/><rect x="712" y="215" width="11" height="28" fill="#000"/><rect x="712" y="223" width="11" height="20" fill="#00c000"/><rect x="724" y="215" width="11" height="28" fill="#000"/><rect x="724" y="223" width="11" height="20" fill="#00c000"/><rect x="736" y="215" width="11" height="28" fill="#000"/><rect x="736" y="223" width="11" height="20" fill="#00c000"/><rect x="748" y="215" width="11" height="28" fill="#000"/><rect x="748" y="223" width="11" height="20" fill="#00c000"/><rect x="760" y="215" width="11" height="28" fill="#000"/><rect x="760" y="223" width="11" height="20" fill="#00c000"/><rect x="772" y="215" width="11" height="28" fill="#000"/><rect x="772" y="223" width="11" height="20" fill="#00c000"/><rect x="784" y="215" width="11" height="28" fill="#000"/><rect x="784" y="223" width="11" height="20" fill="#00c000"/><rect x="796" y="215" width="11" height="28" fill="#000"/><rect x="796" y="223" width="11" height="20" fill="#00c000"/><rect x="567" y="245" width="241" height="30" fill="#c0c0c0"/><rect x="568" y="246" width="11" height="28" fill="#000"/><rect x="568" y="249" width="11" height="25" fill="#00c000"/><rect x="580" y="246" width="11" height="28" fill="#000"/><rect x="580" y="249" width="11" height="25" fill="#00c000"/><rect x="592" y="246" width="11" height="28" fill="#000"/><rect x="592" y="249" width="11" height="25" fill="#00c000"/><rect x="604" y="246" width="11" height="28" fill="#000"/><rect x="604" y="249" width="11" height="25" fill="#00c000"/><rect x="616" y="246" width="11" height="28" fill="#000"/><rect x="616" y="249" width="11" height="25" fill="#00c000"/><rect x="628" y="246" width="11" height="28" fill="#000"/><rect x="628" y="249" width="11" height="25" fill="#00c000"/><rect x="640" y="246" width="11" height="28" fill="#000"/><rect x="640" y="249" width="11" height="25" fill="#00c000"/><rect x="652" y="246" width="11" height="28" fill="#000"/><rect x="652" y="249" width="11" height="25" fill="#00c000"/><rect x="664" y="246" width="11" height="28" fill="#000"/><rect x="664" y="249" width="11" height="25" fill="#00c000"/><rect x="676" y="246" width="11" height="28" fill="#000"/><rect x="676" y="249" width="11" height="25" fill="#00c000"/><rect x="688" y="246" width="11" height="28" fill="#000"/><rect x="688" y="249" width="11" height="25" fill="#00c000"/><rect x="700" y="246" width="11" height="28" fill="#000"/><rect x="700" y="249" width="11" height="25" fill="#00c000"/><rect x="712" y="246" width="11" height="28" fill="#000"/><rect x="712" y="249" width="11" height="25" fill="#00c000"/><rect x="724" y="246" width="11" height="28" fill="#000"/><rect x="724" y="249" width="11" height="25" fill="#00c000"/><rect x="736" y="246" width="11" height="28" fill="#000"/><rect x="736" y="249" width="11" height="25" fill="#00c000"/><rect x="748" y="246" width="11" height="28" fill="#000"/><rect x="748" y="249" width="11" height="25" fill="#00c000"/><rect x="760" y="246" width="11" height="28" fill="#000"/><rect x="760" y="249" width="11" height="25" fill="#00c000"/><rect x="772" y="246" width="11" height="28" fill="#000"/><rect x="772" y="249" width="11" height="25" fill="#00c000"/><rect x="784" y="246" width="11" height="28" fill="#000"/><rect x="784" y="249" width="11" height="25" fill="#00c000"/><rect x="796" y="246" width="11" height="28" fill="#000"/><rect x="796" y="249" width="11" height="25" fill="#00c000"/><rect x="567" y="276" width="241" height="30" fill="#c0c0c0"/><rect x="568" y="277" width="11" height="28" fill="#000"/><rect x="568" y="285" width="11" height="20" fill="#00c000"/><rect x="580" y="277" width="11" height="28" fill="#000"/><rect x="580" y="285" width="11" height="20" fill="#00c000"/><rect x="592" y="277" width="11" height="28" fill="#000"/><rect x="592" y="285" width="11" height="20" fill="#00c000"/><rect x="604" y="277" width="11" height="28" fill="#000"/><rect x="604" y="285" width="11" height="20" fill="#00c000"/><rect x="616" y="277" width="11" height="28" fill="#000"/><rect x="616" y="285" width="11" height="20" fill="#00c000"/><rect x="628" y="277" width="11" height="28" fill="#000"/><rect x="628" y="285" width="11" height="20" fill="#00c000"/><rect x="640" y="277" width="11" height="28" fill="#000"/><rect x="640" y="285" width="11" height="20" fill="#00c000"/><rect x="652" y="277" width="11" height="28" fill="#000"/><rect x="652" y="285" width="11" height="20" fill="#00c000"/><rect x="664" y="277" width="11" height="28" fill="#000"/><rect x="664" y="285" width="11" height="20" fill="#00c000"/><rect x="676" y="277" width="11" height="28" fill="#000"/><rect x="676" y="285" width="11" height="20" fill="#00c000"/><rect x="688" y="277" width="11" height="28" fill="#000"/><rect x="688" y="285" width="11" height="20" fill="#00c000"/><rect x="700" y="277" width="11" height="28" fill="#000"/><rect x="700" y="285" width="11" height="20" fill="#00c000"/><rect x="712" y="277" width="11" height="28" fill="#000"/><rect x="712" y="285" width="11" height="20" fill="#00c000"/><rect x="724" y="277" width="11" height="28" fill="#000"/><rect x="724" y="285" width="11" height="20" fill="#00c000"/><rect x="736" y="277" width="11" height="28" fill="#000"/><rect x="736" y="285" width="11" height="20" fill="#00c000"/><rect x="748" y="277" width="11" height="28" fill="#000"/><rect x="748" y="285" width="11" height="20" fill="#00c000"/><rect x="760" y="277" width="11" height="28" fill="#000"/><rect x="760" y="285" width="11" height="20" fill="#00c000"/><rect x="772" y="277" width="11" height="28" fill="#000"/><rect x="772" y="285" width="11" height="20" fill="#00c000"/><rect x="784" y="277" width="11" height="28" fill="#000"/><rect x="784" y="285" width="11" height="20" fill="#00c000"/><rect x="796" y="277" width="11" height="28" fill="#000"/><rect x="796" y="285" width="11" height="20" fill="#00c000"/><rect x="567" y="307" width="241" height="30" fill="#c0c0c0"/><rect x="568" y="308" width="11" height="28" fill="#000"/><rect x="568" y="321" width="11" height="15" fill="#0000c0"/><rect x="580" y="308" width="11" height="28" fill="#000"/><rect x="580" y="321" width="11" height="15" fill="#0000c0"/><rect x="592" y="308" width="11" height="28" fill="#000"/><rect x="592" y="321" width="11" height="15" fill="#0000c0"/><rect x="604" y="308" width="11" height="28" fill="#000"/><rect x="604" y="321" width="11" height="15" fill="#0000c0"/><rect x="616" y="308" width="11" height="28" fill="#000"/><rect x="616" y="321" width="11" height="15" fill="#0000c0"/><rect x="628" y="308" width="11" height="28" fill="#000"/><rect x="628" y="320" width="11" height="16" fill="#0000c0"/><rect x="640" y="308" width="11" height="28" fill="#000"/><rect x="640" y="320" width="11" height="16" fill="#0000c0"/><rect x="652" y="308" width="11" height="28" fill="#000"/><rect x="652" y="320" width="11" height="16" fill="#0000c0"/><rect x="664" y="308" width="11" height="28" fill="#000"/><rect x="664" y="320" width="11" height="16" fill="#0000c0"/><rect x="676" y="308" width="11" height="28" fill="#000"/><rect x="676" y="320" width="11" height="16" fill="#0000c0"/><rect x="688" y="308" width="11" height="28" fill="#000"/><rect x="688" y="320" width="11" height="16" fill="#0000c0"/><rect x="700" y="308" width="11" height="28" fill="#000"/><rect x="700" y="320" width="11" height="16" fill="#0000c0"/><rect x="712" y="308" width="11" height="28" fill="#000"/><rect x="712" y="320" width="11" height="16" fill="#0000c0"/><rect x="724" y="308" width="11" height="28" fill="#000"/><rect x="724" y="320" width="11" height="16" fill="#0000c0"/><rect x="736" y="308" width="11" height="28" fill="#000"/><rect x="736" y="320" width="11" height="16" fill="#0000c0"/><rect x="748" y="308" width="11" height="28" fill="#000"/><rect x="748" y="320" width="11" height="16" fill="#0000c0"/><rect x="760" y="308" width="11" height="28" fill="#000"/><rect x="760" y="320" width="11" height="16" fill="#0000c0"/><rect x="772" y="308" width="11" height="28" fill="#000"/><rect x="772" y="320" width="11" height="16" fill="#0000c0"/><rect x="784" y="308" width="11" height="28" fill="#000"/><rect x="784" y="321" width="11" height="15" fill="#0000c0"/><rect x="796" y="308" width="11" height="28" fill="#000"/><rect x="796" y="321" width="11" height="15" fill="#0000c0"/><rect x="567" y="338" width="241" height="30" fill="#c0c0c0"/><rect x="568" y="339" width="11" height="28" fill="#000"/><rect x="568" y="347" width="11" height="20" fill="#00c000"/><rect x="580" y="339" width="11" height="28" fill="#000"/><rect x="580" y="347" width="11" height="20" fill="#00c000"/><rect x="592" y="339" width="11" height="28" fill="#000"/><rect x="592" y="347" width="11" height="20" fill="#00c000"/><rect x="604" y="339" width="11" height="28" fill="#000"/><rect x="604" y="347" width="11" height="20" fill="#00c000"/><rect x="616" y="339" width="11" height="28" fill="#000"/><rect x="616" y="347" width="11" height="20" fill="#00c000"/><rect x="628" y="339" width="11" height="28" fill="#000"/><rect x="628" y="347" width="11" height="20" fill="#00c000"/><rect x="640" y="339" width="11" height="28" fill="#000"/><rect x="640" y="347" width="11" height="20" fill="#00c000"/><rect x="652" y="339" width="11" height="28" fill="#000"/><rect x="652" y="347" width="11" height="20" fill="#00c000"/><rect x="664" y="339" width="11" height="28" fill="#000"/><rect x="664" y="347" width="11" height="20" fill="#00c000"/><rect x="676" y="339" width="11" height="28" fill="#000"/><rect x="676" y="347" width="11" height="20" fill="#00c000"/><rect x="688" y="339" width="11" height="28" fill="#000"/><rect x="688" y="347" width="11" height="20" fill="#00c000"/><rect x="700" y="339" width="11" height="28" fill="#000"/><rect x="700" y="347" width="11" height="20" fill="#00c000"/><rect x="712" y="339" width="11" height="28" fill="#000"/><rect x="712" y="347" width="11" height="20" fill="#00c000"/><rect x="724" y="339" width="11" height="28" fill="#000"/><rect x="724" y="347" width="11" height="20" fill="#00c000"/><rect x="736" y="339" width="11" height="28" fill="#000"/><rect x="736" y="347" width="11" height="20" fill="#00c000"/><rect x="748" y="339" width="11" height="28" fill="#000"/><rect x="748" y="347" width="11" height="20" fill="#00c000"/><rect x="760" y="339" width="11" height="28" fill="#000"/><rect x="760" y="347" width="11" height="20" fill="#00c000"/><rect x="772" y="339" width="11" height="28" fill="#000"/><rect x="772" y="347" width="11" height="20" fill="#00c000"/><rect x="784" y="339" width="11" height="28" fill="#000"/><rect x="784" y="347" width="11" height="20" fill="#00c000"/><rect x="796" y="339" width="11" height="28" fill="#000"/><rect x="796" y="347" width="11" height="20" fill="#00c000"/><rect x="567" y="369" width="241" height="30" fill="#c0c0c0"/><rect x="568" y="370" width="11" height="28" fill="#000"/><rect x="568" y="374" width="11" height="24" fill="#00c000"/><rect x="580" y="370" width="11" height="28" fill="#000"/><rect x="580" y="374" width="11" height="24" fill="#00c000"/><rect x="592" y="370" width="11" height="28" fill="#000"/><rect x="592" y="374" width="11" height="24" fill="#00c000"/><rect x="604" y="370" width="11" height="28" fill="#000"/><rect x="604" y="374" width="11" height="24" fill="#00c000"/><rect x="616" y="370" width="11" height="28" fill="#000"/><rect x="616" y="374" width="11" height="24" fill="#00c000"/><rect x="628" y="370" width="11" height="28" fill="#000"/><rect x="628" y="374" width="11" height="24" fill="#00c000"/><rect x="640" y="370" width="11" height="28" fill="#000"/><rect x="640" y="374" width="11" height="24" fill="#00c000"/><rect x="652" y="370" width="11" height="28" fill="#000"/><rect x="652" y="374" width="11" height="24" fill="#00c000"/><rect x="664" y="370" width="11" height="28" fill="#000"/><rect x="664" y="374" width="11" height="24" fill="#00c000"/><rect x="676" y="370" width="11" height="28" fill="#000"/><rect x="676" y="374" width="11" height="24" fill="#00c000"/><rect x="688" y="370" width="11" height="28" fill="#000"/><rect x="688" y="374" width="11" height="24" fill="#00c000"/><rect x="700" y="370" width="11" height="28" fill="#000"/><rect x="700" y="374" width="11" height="24" fill="#00c000"/><rect x="712" y="370" width="11" height="28" fill="#000"/><rect x="712" y="374" width="11" height="24" fill="#00c000"/><rect x="724" y="370" width="11" height="28" fill="#000"/><rect x="724" y="374" width="11" height="24" fill="#00c000"/><rect x="736" y="370" width="11" height="28" fill="#000"/><rect x="736" y="374" width="11" height="24" fill="#00c000"/><rect x="748" y="370" width="11" height="28" fill="#000"/><rect x="748" y="374" width="11" height="24" fill="#00c000"/><rect x="760" y="370" width="11" height="28" fill="#000"/><rect x="760" y="374" width="11" height="24" fill="#00c000"/><rect x="772" y="370" width="11" height="28" fill="#000"/><rect x="772" y="374" width="11" height="24" fill="#00c000"/><rect x="784" y="370" width="11" height="28" fill="#000"/><rect x="784" y="374" width="11" height="24" fill="#00c000"/><rect x="796" y="370" width="11" height="28" fill="#000"/><rect x="796" y="374" width="11" height="24" fill="#00c000"/><rect x="567" y="400" width="241" height="30" fill="#c0c0c0"/><rect x="568" y="401" width="11" height="28" fill="#000"/><rect x="568" y="406" width="11" height="23" fill="#00c000"/><rect x="580" y="401" width="11" height="28" fill="#000"/><rect x="580" y="406" width="11" height="23" fill="#00c000"/><rect x="592" y="401" width="11" height="28" fill="#000"/><rect x="592" y="406" width="11" height="23" fill="#00c000"/><rect x="604" y="401" width="11" height="28" fill="#000"/><rect x="604" y="406" width="11" height="23" fill="#00c000"/><rect x="616" y="401" width="11" height="28" fill="#000"/><rect x="616" y="406" width="11" height="23" fill="#00c000"/><rect x="628" y="401" width="11" height="28" fill="#000"/><rect x="628" y="406" width="11" height="23" fill="#00c000"/><rect x="640" y="401" width="11" height="28" fill="#000"/><rect x="640" y="406" width="11" height="23" fill="#00c000"/><rect x="652" y="401" width="11" height="28" fill="#000"/><rect x="652" y="406" width="11" height="23" fill="#00c000"/><rect x="664" y="401" width="11" height="28" fill="#000"/><rect x="664" y="406" width="11" height="23" fill="#00c000"/><rect x="676" y="401" width="11" height="28" fill="#000"/><rect x="676" y="406" width="11" height="23" fill="#00c000"/><rect x="688" y="401" width="11" height="28" fill="#000"/><rect x="688" y="406" width="11" height="23" fill="#00c000"/><rect x="700" y="401" width="11" height="28" fill="#000"/><rect x="700" y="406" width="11" height="23" fill="#00c000"/><rect x="712" y="401" width="11" height="28" fill="#000"/><rect x="712" y="406" width="11" height="23" fill="#00c000"/><rect x="724" y="401" width="11" height="28" fill="#000"/><rect x="724" y="406" width="11" height="23" fill="#00c000"/><rect x="736" y="401" width="11" height="28" fill="#000"/><rect x="736" y="406" width="11" height="23" fill="#00c000"/><rect x="748" y="401" width="11" height="28" fill="#000"/><rect x="748" y="406" width="11" height="23" fill="#00c000"/><rect x="760" y="401" width="11" height="28" fill="#000"/><rect x="760" y="406" width="11" height="23" fill="#00c000"/><rect x="772" y="401" width="11" height="28" fill="#000"/><rect x="772" y="406" width="11" height="23" fill="#00c000"/><rect x="784" y="401" width="11" height="28" fill="#000"/><rect x="784" y="406" width="11" height="23" fill="#00c000"/><rect x="796" y="401" width="11" height="28" fill="#000"/><rect x="796" y="406" width="11" height="23" fill="#00c000"/><rect x="567" y="431" width="241" height="30" fill="#c0c0c0"/><rect x="568" y="432" width="11" height="28" fill="#000"/><rect x="568" y="434" width="11" height="26" fill="#0000c0"/><rect x="580" y="432" width="11" height="28" fill="#000"/><rect x="580" y="434" width="11" height="26" fill="#0000c0"/><rect x="592" y="432" width="11" height="28" fill="#000"/><rect x="592" y="434" width="11" height="26" fill="#0000c0"/><rect x="604" y="432" width="11" height="28" fill="#000"/><rect x="604" y="434" width="11" height="26" fill="#0000c0"/><rect x="616" y="432" width="11" height="28" fill="#000"/><rect x="616" y="434" width="11" height="26" fill="#0000c0"/><rect x="628" y="432" width="11" height="28" fill="#000"/><rect x="628" y="434" width="11" height="26" fill="#0000c0"/><rect x="640" y="432" width="11" height="28" fill="#000"/><rect x="640" y="434" width="11" height="26" fill="#0000c0"/><rect x="652" y="432" width="11" height="28" fill="#000"/><rect x="652" y="434" width="11" height="26" fill="#0000c0"/><rect x="664" y="432" width="11" height="28" fill="#000"/><rect x="664" y="434" width="11" height="26" fill="#0000c0"/><rect x="676" y="432" width="11" height="28" fill="#000"/><rect x="676" y="434" width="11" height="26" fill="#0000c0"/><rect x="688" y="432" width="11" height="28" fill="#000"/><rect x="688" y="434" width="11" height="26" fill="#0000c0"/><rect x="700" y="432" width="11" height="28" fill="#000"/><rect x="700" y="434" width="11" height="26" fill="#0000c0"/><rect x="712" y="432" width="11" height="28" fill="#000"/><rect x="712" y="434" width="11" height="26" fill="#0000c0"/><rect x="724" y="432" width="11" height="28" fill="#000"/><rect x="724" y="434" width="11" height="26" fill="#0000c0"/><rect x="736" y="432" width="11" height="28" fill="#000"/><rect x="736" y="434" width="11" height="26" fill="#0000c0"/><rect x="748" y="432" width="11" height="28" fill="#000"/><rect x="748" y="434" width="11" height="26" fill="#0000c0"/><rect x="760" y="432" width="11" height="28" fill="#000"/><rect x="760" y="434" width="11" height="26" fill="#0000c0"/><rect x="772" y="432" width="11" height="28" fill="#000"/><rect x="772" y="434" width="11" height="26" fill="#0000c0"/><rect x="784" y="432" width="11" height="28" fill="#000"/><rect x="784" y="434" width="11" height="26" fill="#0000c0"/><rect x="796" y="432" width="11" height="28" fill="#000"/><rect x="796" y="434" width="11" height="26" fill="#0000c0"/><rect x="567" y="462" width="241" height="30" fill="#c0c0c0"/><rect x="568" y="463" width="11" height="28" fill="#000"/><rect x="568" y="471" width="11" height="20" fill="#0000c0"/><rect x="580" y="463" width="11" height="28" fill="#000"/><rect x="580" y="471" width="11" height="20" fill="#0000c0"/><rect x="592" y="463" width="11" height="28" fill="#000"/><rect x="592" y="471" width="11" height="20" fill="#0000c0"/><rect x="604" y="463" width="11" height="28" fill="#000"/><rect x="604" y="471" width="11" height="20" fill="#0000c0"/><rect x="616" y="463" width="11" height="28" fill="#000"/><rect x="616" y="471" width="11" height="20" fill="#0000c0"/><rect x="628" y="463" width="11" height="28" fill="#000"/><rect x="628" y="471" width="11" height="20" fill="#0000c0"/><rect x="640" y="463" width="11" height="28" fill="#000"/><rect x="640" y="471" width="11" height="20" fill="#0000c0"/><rect x="652" y="463" width="11" height="28" fill="#000"/><rect x="652" y="471" width="11" height="20" fill="#0000c0"/><rect x="664" y="463" width="11" height="28" fill="#000"/><rect x="664" y="471" width="11" height="20" fill="#0000c0"/><rect x="676" y="463" width="11" height="28" fill="#000"/><rect x="676" y="471" width="11" height="20" fill="#0000c0"/><rect x="688" y="463" width="11" height="28" fill="#000"/><rect x="688" y="471" width="11" height="20" fill="#0000c0"/><rect x="700" y="463" width="11" height="28" fill="#000"/><rect x="700" y="471" width="11" height="20" fill="#0000c0"/><rect x="712" y="463" width="11" height="28" fill="#000"/><rect x="712" y="471" width="11" height="20" fill="#0000c0"/><rect x="724" y="463" width="11" height="28" fill="#000"/><rect x="724" y="472" width="11" height="19" fill="#0000c0"/><rect x="736" y="463" width="11" height="28" fill="#000"/><rect x="736" y="472" width="11" height="19" fill="#0000c0"/><rect x="748" y="463" width="11" height="28" fill="#000"/><rect x="748" y="472" width="11" height="19" fill="#0000c0"/><rect x="760" y="463" width="11" height="28" fill="#000"/><rect x="760" y="472" width="11" height="19" fill="#0000c0"/><rect x="772" y="463" width="11" height="28" fill="#000"/><rect x="772" y="472" width="11" height="19" fill="#0000c0"/><rect x="784" y="463" width="11" height="28" fill="#000"/><rect x="784" y="472" width="11" height="19" fill="#0000c0"/><rect x="796" y="463" width="11" height="28" fill="#000"/><rect x="796" y="472" width="11" height="19" fill="#0000c0"/><rect x="567" y="493" width="241" height="30" fill="#c0c0c0"/><rect x="568" y="494" width="11" height="28" fill="#000"/><rect x="568" y="503" width="11" height="19" fill="#0000c0"/><rect x="580" y="494" width="11" height="28" fill="#000"/><rect x="580" y="503" width="11" height="19" fill="#0000c0"/><rect x="592" y="494" width="11" height="28" fill="#000"/><rect x="592" y="503" width="11" height="19" fill="#0000c0"/><rect x="604" y="494" width="11" height="28" fill="#000"/><rect x="604" y="503" width="11" height="19" fill="#0000c0"/><rect x="616" y="494" width="11" height="28" fill="#000"/><rect x="616" y="503" width="11" height="19" fill="#0000c0"/><rect x="628" y="494" width="11" height="28" fill="#000"/><rect x="628" y="503" width="11" height="19" fill="#0000c0"/><rect x="640" y="494" width="11" height="28" fill="#000"/><rect x="640" y="503" width="11" height="19" fill="#0000c0"/><rect x="652" y="494" width="11" height="28" fill="#000"/><rect x="652" y="503" width="11" height="19" fill="#0000c0"/><rect x="664" y="494" width="11" height="28" fill="#000"/><rect x="664" y="503" width="11" height="19" fill="#0000c0"/><rect x="676" y="494" width="11" height="28" fill="#000"/><rect x="676" y="503" width="11" height="19" fill="#0000c0"/><rect x="688" y="494" width="11" height="28" fill="#000"/><rect x="688" y="503" width="11" height="19" fill="#0000c0"/><rect x="700" y="494" width="11" height="28" fill="#000"/><rect x="700" y="503" width="11" height="19" fill="#0000c0"/><rect x="712" y="494" width="11" height="28" fill="#000"/><rect x="712" y="503" width="11" height="19" fill="#0000c0"/><rect x="724" y="494" width="11" height="28" fill="#000"/><rect x="724" y="503" width="11" height="19" fill="#0000c0"/><rect x="736" y="494" width="11" height="28" fill="#000"/><rect x="736" y="503" width="11" height="19" fill="#0000c0"/><rect x="748" y="494" width="11" height="28" fill="#000"/><rect x="748" y="503" width="11" height="19" fill="#0000c0"/><rect x="760" y="494" width="11" height="28" fill="#000"/><rect x="760" y="503" width="11" height="19" fill="#0000c0"/><rect x="772" y="494" width="11" height="28" fill="#000"/><rect x="772" y="503" width="11" height="19" fill="#0000c0"/><rect x="784" y="494" width="11" height="28" fill="#000"/><rect x="784" y="503" width="11" height="19" fill="#0000c0"/><rect x="796" y="494" width="11" height="28" fill="#000"/><rect x="796" y="503" width="11" height="19" fill="#0000c0"/><rect x="567" y="524" width="241" height="30" fill="#c0c0c0"/><rect x="568" y="525" width="11" height="28" fill="#000"/><rect x="568" y="534" width="11" height="19" fill="#0000c0"/><rect x="580" y="525" width="11" height="28" fill="#000"/><rect x="580" y="534" width="11" height="19" fill="#0000c0"/><rect x="592" y="525" width="11" height="28" fill="#000"/><rect x="592" y="534" width="11" height="19" fill="#0000c0"/><rect x="604" y="525" width="11" height="28" fill="#000"/><rect x="604" y="534" width="11" height="19" fill="#0000c0"/><rect x="616" y="525" width="11" height="28" fill="#000"/><rect x="616" y="534" width="11" height="19" fill="#0000c0"/><rect x="628" y="525" width="11" height="28" fill="#000"/><rect x="628" y="534" width="11" height="19" fill="#0000c0"/><rect x="640" y="525" width="11" height="28" fill="#000"/><rect x="640" y="534" width="11" height="19" fill="#0000c0"/><rect x="652" y="525" width="11" height="28" fill="#000"/><rect x="652" y="534" width="11" height="19" fill="#0000c0"/><rect x="664" y="525" width="11" height="28" fill="#000"/><rect x="664" y="534" width="11" height="19" fill="#0000c0"/><rect x="676" y="525" width="11" height="28" fill="#000"/><rect x="676" y="534" width="11" height="19" fill="#0000c0"/><rect x="688" y="525" width="11" height="28" fill="#000"/><rect x="688" y="534" width="11" height="19" fill="#0000c0"/><rect x="700" y="525" width="11" height="28" fill="#000"/><rect x="700" y="534" width="11" height="19" fill="#0000c0"/><rect x="712" y="525" width="11" height="28" fill="#000"/><rect x="712" y="534" width="11" height="19" fill="#0000c0"/><rect x="724" y="525" width="11" height="28" fill="#000"/><rect x="724" y="534" width="11" height="19" fill="#0000c0"/><rect x="736" y="525" width="11" height="28" fill="#000"/><rect x="736" y="534" width="11" height="19" fill="#0000c0"/><rect x="748" y="525" width="11" height="28" fill="#000"/><rect x="748" y="534" width="11" height="19" fill="#0000c0"/><rect x="760" y="525" width="11" height="28" fill="#000"/><rect x="760" y="534" width="11" height="19" fill="#0000c0"/><rect x="772" y="525" width="11" height="28" fill="#000"/><rect x="772" y="534" width="11" height="19" fill="#0000c0"/><rect x="784" y="525" width="11" height="28" fill="#000"/><rect x="784" y="534" width="11" height="19" fill="#0000c0"/><rect x="796" y="525" width="11" height="28" fill="#000"/><rect x="796" y="534" width="11" height="19" fill="#0000c0"/></svg><div class="a" style="left:505px;top:151.0px;font:9px/10px 'Liberation Sans',sans-serif;color:#e8e8e8;white-space:nowrap;transform:scaleX(0.86);transform-origin:0 0">GPS G19</div><div class="a" style="left:505px;top:161.6px;font:9px/10px 'Liberation Sans',sans-serif;color:#e8e8e8;white-space:nowrap;transform:scaleX(0.86);transform-origin:0 0">El 36 Az 174</div><div class="a" style="left:505px;top:172.2px;font:9px/10px 'Liberation Sans',sans-serif;color:#e8e8e8;white-space:nowrap;transform:scaleX(0.86);transform-origin:0 0">C/N0 46.0</div><div class="a" style="left:810px;top:150.5px;font:9px/10px 'Liberation Sans',sans-serif;color:#e8e8e8;white-space:nowrap;transform:scaleX(0.86);transform-origin:0 0">55</div><div class="a" style="left:810px;top:161.1px;font:9px/10px 'Liberation Sans',sans-serif;color:#e8e8e8;white-space:nowrap;transform:scaleX(0.86);transform-origin:0 0">dB</div><div class="a" style="left:810px;top:171.7px;font:9px/10px 'Liberation Sans',sans-serif;color:#e8e8e8;white-space:nowrap;transform:scaleX(0.86);transform-origin:0 0">5</div><div class="a" style="left:505px;top:182.0px;font:9px/10px 'Liberation Sans',sans-serif;color:#e8e8e8;white-space:nowrap;transform:scaleX(0.86);transform-origin:0 0">GPS G20</div><div class="a" style="left:505px;top:192.6px;font:9px/10px 'Liberation Sans',sans-serif;color:#e8e8e8;white-space:nowrap;transform:scaleX(0.86);transform-origin:0 0">El 36 Az 241</div><div class="a" style="left:505px;top:203.2px;font:9px/10px 'Liberation Sans',sans-serif;color:#e8e8e8;white-space:nowrap;transform:scaleX(0.86);transform-origin:0 0">C/N0 47.0</div><div class="a" style="left:810px;top:181.5px;font:9px/10px 'Liberation Sans',sans-serif;color:#e8e8e8;white-space:nowrap;transform:scaleX(0.86);transform-origin:0 0">55</div><div class="a" style="left:810px;top:192.1px;font:9px/10px 'Liberation Sans',sans-serif;color:#e8e8e8;white-space:nowrap;transform:scaleX(0.86);transform-origin:0 0">dB</div><div class="a" style="left:810px;top:202.7px;font:9px/10px 'Liberation Sans',sans-serif;color:#e8e8e8;white-space:nowrap;transform:scaleX(0.86);transform-origin:0 0">5</div><div class="a" style="left:505px;top:213.0px;font:9px/10px 'Liberation Sans',sans-serif;color:#e8e8e8;white-space:nowrap;transform:scaleX(0.86);transform-origin:0 0">GPS G22</div><div class="a" style="left:505px;top:223.6px;font:9px/10px 'Liberation Sans',sans-serif;color:#e8e8e8;white-space:nowrap;transform:scaleX(0.86);transform-origin:0 0">El 19 Az 64</div><div class="a" style="left:505px;top:234.2px;font:9px/10px 'Liberation Sans',sans-serif;color:#e8e8e8;white-space:nowrap;transform:scaleX(0.86);transform-origin:0 0">C/N0 41.0</div><div class="a" style="left:810px;top:212.5px;font:9px/10px 'Liberation Sans',sans-serif;color:#e8e8e8;white-space:nowrap;transform:scaleX(0.86);transform-origin:0 0">55</div><div class="a" style="left:810px;top:223.1px;font:9px/10px 'Liberation Sans',sans-serif;color:#e8e8e8;white-space:nowrap;transform:scaleX(0.86);transform-origin:0 0">dB</div><div class="a" style="left:810px;top:233.7px;font:9px/10px 'Liberation Sans',sans-serif;color:#e8e8e8;white-space:nowrap;transform:scaleX(0.86);transform-origin:0 0">5</div><div class="a" style="left:505px;top:244.0px;font:9px/10px 'Liberation Sans',sans-serif;color:#e8e8e8;white-space:nowrap;transform:scaleX(0.86);transform-origin:0 0">GPS G32</div><div class="a" style="left:505px;top:254.6px;font:9px/10px 'Liberation Sans',sans-serif;color:#e8e8e8;white-space:nowrap;transform:scaleX(0.86);transform-origin:0 0">El 64 Az 228</div><div class="a" style="left:505px;top:265.2px;font:9px/10px 'Liberation Sans',sans-serif;color:#e8e8e8;white-space:nowrap;transform:scaleX(0.86);transform-origin:0 0">C/N0 51.0</div><div class="a" style="left:810px;top:243.5px;font:9px/10px 'Liberation Sans',sans-serif;color:#e8e8e8;white-space:nowrap;transform:scaleX(0.86);transform-origin:0 0">55</div><div class="a" style="left:810px;top:254.1px;font:9px/10px 'Liberation Sans',sans-serif;color:#e8e8e8;white-space:nowrap;transform:scaleX(0.86);transform-origin:0 0">dB</div><div class="a" style="left:810px;top:264.7px;font:9px/10px 'Liberation Sans',sans-serif;color:#e8e8e8;white-space:nowrap;transform:scaleX(0.86);transform-origin:0 0">5</div><div class="a" style="left:505px;top:275.0px;font:9px/10px 'Liberation Sans',sans-serif;color:#e8e8e8;white-space:nowrap;transform:scaleX(0.86);transform-origin:0 0">GPS G28</div><div class="a" style="left:505px;top:285.6px;font:9px/10px 'Liberation Sans',sans-serif;color:#e8e8e8;white-space:nowrap;transform:scaleX(0.86);transform-origin:0 0">El 19 Az 291</div><div class="a" style="left:505px;top:296.2px;font:9px/10px 'Liberation Sans',sans-serif;color:#e8e8e8;white-space:nowrap;transform:scaleX(0.86);transform-origin:0 0">C/N0 42.0</div><div class="a" style="left:810px;top:274.5px;font:9px/10px 'Liberation Sans',sans-serif;color:#e8e8e8;white-space:nowrap;transform:scaleX(0.86);transform-origin:0 0">55</div><div class="a" style="left:810px;top:285.1px;font:9px/10px 'Liberation Sans',sans-serif;color:#e8e8e8;white-space:nowrap;transform:scaleX(0.86);transform-origin:0 0">dB</div><div class="a" style="left:810px;top:295.7px;font:9px/10px 'Liberation Sans',sans-serif;color:#e8e8e8;white-space:nowrap;transform:scaleX(0.86);transform-origin:0 0">5</div><div class="a" style="left:505px;top:306.0px;font:9px/10px 'Liberation Sans',sans-serif;color:#e8e8e8;white-space:nowrap;transform:scaleX(0.86);transform-origin:0 0">GPS G3</div><div class="a" style="left:505px;top:316.6px;font:9px/10px 'Liberation Sans',sans-serif;color:#e8e8e8;white-space:nowrap;transform:scaleX(0.86);transform-origin:0 0">El 3 Az 166</div><div class="a" style="left:505px;top:327.2px;font:9px/10px 'Liberation Sans',sans-serif;color:#e8e8e8;white-space:nowrap;transform:scaleX(0.86);transform-origin:0 0">C/N0 33.0</div><div class="a" style="left:810px;top:305.5px;font:9px/10px 'Liberation Sans',sans-serif;color:#e8e8e8;white-space:nowrap;transform:scaleX(0.86);transform-origin:0 0">55</div><div class="a" style="left:810px;top:316.1px;font:9px/10px 'Liberation Sans',sans-serif;color:#e8e8e8;white-space:nowrap;transform:scaleX(0.86);transform-origin:0 0">dB</div><div class="a" style="left:810px;top:326.7px;font:9px/10px 'Liberation Sans',sans-serif;color:#e8e8e8;white-space:nowrap;transform:scaleX(0.86);transform-origin:0 0">5</div><div class="a" style="left:505px;top:337.0px;font:9px/10px 'Liberation Sans',sans-serif;color:#e8e8e8;white-space:nowrap;transform:scaleX(0.86);transform-origin:0 0">GPS G17</div><div class="a" style="left:505px;top:347.6px;font:9px/10px 'Liberation Sans',sans-serif;color:#e8e8e8;white-space:nowrap;transform:scaleX(0.86);transform-origin:0 0">El 13 Az 320</div><div class="a" style="left:505px;top:358.2px;font:9px/10px 'Liberation Sans',sans-serif;color:#e8e8e8;white-space:nowrap;transform:scaleX(0.86);transform-origin:0 0">C/N0 42.0</div><div class="a" style="left:810px;top:336.5px;font:9px/10px 'Liberation Sans',sans-serif;color:#e8e8e8;white-space:nowrap;transform:scaleX(0.86);transform-origin:0 0">55</div><div class="a" style="left:810px;top:347.1px;font:9px/10px 'Liberation Sans',sans-serif;color:#e8e8e8;white-space:nowrap;transform:scaleX(0.86);transform-origin:0 0">dB</div><div class="a" style="left:810px;top:357.7px;font:9px/10px 'Liberation Sans',sans-serif;color:#e8e8e8;white-space:nowrap;transform:scaleX(0.86);transform-origin:0 0">5</div><div class="a" style="left:505px;top:368.0px;font:9px/10px 'Liberation Sans',sans-serif;color:#e8e8e8;white-space:nowrap;transform:scaleX(0.86);transform-origin:0 0">GPS G11</div><div class="a" style="left:505px;top:378.6px;font:9px/10px 'Liberation Sans',sans-serif;color:#e8e8e8;white-space:nowrap;transform:scaleX(0.86);transform-origin:0 0">El 81 Az 221</div><div class="a" style="left:505px;top:389.2px;font:9px/10px 'Liberation Sans',sans-serif;color:#e8e8e8;white-space:nowrap;transform:scaleX(0.86);transform-origin:0 0">C/N0 49.0</div><div class="a" style="left:810px;top:367.5px;font:9px/10px 'Liberation Sans',sans-serif;color:#e8e8e8;white-space:nowrap;transform:scaleX(0.86);transform-origin:0 0">55</div><div class="a" style="left:810px;top:378.1px;font:9px/10px 'Liberation Sans',sans-serif;color:#e8e8e8;white-space:nowrap;transform:scaleX(0.86);transform-origin:0 0">dB</div><div class="a" style="left:810px;top:388.7px;font:9px/10px 'Liberation Sans',sans-serif;color:#e8e8e8;white-space:nowrap;transform:scaleX(0.86);transform-origin:0 0">5</div><div class="a" style="left:505px;top:399.0px;font:9px/10px 'Liberation Sans',sans-serif;color:#e8e8e8;white-space:nowrap;transform:scaleX(0.86);transform-origin:0 0">GPS G14</div><div class="a" style="left:505px;top:409.6px;font:9px/10px 'Liberation Sans',sans-serif;color:#e8e8e8;white-space:nowrap;transform:scaleX(0.86);transform-origin:0 0">El 43 Az 69</div><div class="a" style="left:505px;top:420.2px;font:9px/10px 'Liberation Sans',sans-serif;color:#e8e8e8;white-space:nowrap;transform:scaleX(0.86);transform-origin:0 0">C/N0 47.0</div><div class="a" style="left:810px;top:398.5px;font:9px/10px 'Liberation Sans',sans-serif;color:#e8e8e8;white-space:nowrap;transform:scaleX(0.86);transform-origin:0 0">55</div><div class="a" style="left:810px;top:409.1px;font:9px/10px 'Liberation Sans',sans-serif;color:#e8e8e8;white-space:nowrap;transform:scaleX(0.86);transform-origin:0 0">dB</div><div class="a" style="left:810px;top:419.7px;font:9px/10px 'Liberation Sans',sans-serif;color:#e8e8e8;white-space:nowrap;transform:scaleX(0.86);transform-origin:0 0">5</div><div class="a" style="left:505px;top:430.0px;font:9px/10px 'Liberation Sans',sans-serif;color:#e8e8e8;white-space:nowrap;transform:scaleX(0.86);transform-origin:0 0">GPS G1</div><div class="a" style="left:505px;top:440.6px;font:9px/10px 'Liberation Sans',sans-serif;color:#e8e8e8;white-space:nowrap;transform:scaleX(0.86);transform-origin:0 0">El 66 Az 293</div><div class="a" style="left:505px;top:451.2px;font:9px/10px 'Liberation Sans',sans-serif;color:#e8e8e8;white-space:nowrap;transform:scaleX(0.86);transform-origin:0 0">C/N0 52.0</div><div class="a" style="left:810px;top:429.5px;font:9px/10px 'Liberation Sans',sans-serif;color:#e8e8e8;white-space:nowrap;transform:scaleX(0.86);transform-origin:0 0">55</div><div class="a" style="left:810px;top:440.1px;font:9px/10px 'Liberation Sans',sans-serif;color:#e8e8e8;white-space:nowrap;transform:scaleX(0.86);transform-origin:0 0">dB</div><div class="a" style="left:810px;top:450.7px;font:9px/10px 'Liberation Sans',sans-serif;color:#e8e8e8;white-space:nowrap;transform:scaleX(0.86);transform-origin:0 0">5</div><div class="a" style="left:505px;top:461.0px;font:9px/10px 'Liberation Sans',sans-serif;color:#e8e8e8;white-space:nowrap;transform:scaleX(0.86);transform-origin:0 0">GPS G9</div><div class="a" style="left:505px;top:471.6px;font:9px/10px 'Liberation Sans',sans-serif;color:#e8e8e8;white-space:nowrap;transform:scaleX(0.86);transform-origin:0 0">El 3 Az 7</div><div class="a" style="left:505px;top:482.2px;font:9px/10px 'Liberation Sans',sans-serif;color:#e8e8e8;white-space:nowrap;transform:scaleX(0.86);transform-origin:0 0">C/N0 40.0</div><div class="a" style="left:810px;top:460.5px;font:9px/10px 'Liberation Sans',sans-serif;color:#e8e8e8;white-space:nowrap;transform:scaleX(0.86);transform-origin:0 0">55</div><div class="a" style="left:810px;top:471.1px;font:9px/10px 'Liberation Sans',sans-serif;color:#e8e8e8;white-space:nowrap;transform:scaleX(0.86);transform-origin:0 0">dB</div><div class="a" style="left:810px;top:481.7px;font:9px/10px 'Liberation Sans',sans-serif;color:#e8e8e8;white-space:nowrap;transform:scaleX(0.86);transform-origin:0 0">5</div><div class="a" style="left:505px;top:492.0px;font:9px/10px 'Liberation Sans',sans-serif;color:#e8e8e8;white-space:nowrap;transform:scaleX(0.86);transform-origin:0 0">EGNOS S120</div><div class="a" style="left:505px;top:502.6px;font:9px/10px 'Liberation Sans',sans-serif;color:#e8e8e8;white-space:nowrap;transform:scaleX(0.86);transform-origin:0 0">El 26 Az 214</div><div class="a" style="left:505px;top:513.2px;font:9px/10px 'Liberation Sans',sans-serif;color:#e8e8e8;white-space:nowrap;transform:scaleX(0.86);transform-origin:0 0">C/N0 39.0</div><div class="a" style="left:810px;top:491.5px;font:9px/10px 'Liberation Sans',sans-serif;color:#e8e8e8;white-space:nowrap;transform:scaleX(0.86);transform-origin:0 0">55</div><div class="a" style="left:810px;top:502.1px;font:9px/10px 'Liberation Sans',sans-serif;color:#e8e8e8;white-space:nowrap;transform:scaleX(0.86);transform-origin:0 0">dB</div><div class="a" style="left:810px;top:512.7px;font:9px/10px 'Liberation Sans',sans-serif;color:#e8e8e8;white-space:nowrap;transform:scaleX(0.86);transform-origin:0 0">5</div><div class="a" style="left:505px;top:523.0px;font:9px/10px 'Liberation Sans',sans-serif;color:#e8e8e8;white-space:nowrap;transform:scaleX(0.86);transform-origin:0 0">EGNOS S124</div><div class="a" style="left:505px;top:533.6px;font:9px/10px 'Liberation Sans',sans-serif;color:#e8e8e8;white-space:nowrap;transform:scaleX(0.86);transform-origin:0 0">El 31 Az 168</div><div class="a" style="left:505px;top:544.2px;font:9px/10px 'Liberation Sans',sans-serif;color:#e8e8e8;white-space:nowrap;transform:scaleX(0.86);transform-origin:0 0">C/N0 40.0</div><div class="a" style="left:810px;top:522.5px;font:9px/10px 'Liberation Sans',sans-serif;color:#e8e8e8;white-space:nowrap;transform:scaleX(0.86);transform-origin:0 0">55</div><div class="a" style="left:810px;top:533.1px;font:9px/10px 'Liberation Sans',sans-serif;color:#e8e8e8;white-space:nowrap;transform:scaleX(0.86);transform-origin:0 0">dB</div><div class="a" style="left:810px;top:543.7px;font:9px/10px 'Liberation Sans',sans-serif;color:#e8e8e8;white-space:nowrap;transform:scaleX(0.86);transform-origin:0 0">5</div><svg width="1024" height="768"><rect x="504" y="579" width="24" height="118" fill="#c0c0c0"/><rect x="505" y="580" width="22" height="116" fill="#000"/><rect x="505" y="601" width="22" height="95" fill="#00c000"/><rect x="505" y="600" width="22" height="1" fill="#c0c0c0"/><rect x="527" y="579" width="24" height="118" fill="#c0c0c0"/><rect x="528" y="580" width="22" height="116" fill="#000"/><rect x="528" y="598" width="22" height="3" fill="#00c000"/><rect x="528" y="601" width="22" height="95" fill="#00c000"/><rect x="528" y="597" width="22" height="1" fill="#c0c0c0"/><rect x="528" y="600" width="22" height="1" fill="#c0c0c0"/><rect x="550" y="579" width="24" height="118" fill="#c0c0c0"/><rect x="551" y="580" width="22" height="116" fill="#000"/><rect x="551" y="613" width="22" height="83" fill="#00c000"/><rect x="551" y="609" width="22" height="1" fill="#c0c0c0"/><rect x="551" y="612" width="22" height="1" fill="#c0c0c0"/><rect x="573" y="579" width="24" height="118" fill="#c0c0c0"/><rect x="574" y="580" width="22" height="116" fill="#000"/><rect x="574" y="589" width="22" height="107" fill="#00c000"/><rect x="574" y="588" width="22" height="1" fill="#c0c0c0"/><rect x="596" y="579" width="25" height="118" fill="#c0c0c0"/><rect x="597" y="580" width="23" height="116" fill="#000"/><rect x="597" y="610" width="23" height="86" fill="#00c000"/><rect x="597" y="609" width="23" height="1" fill="#c0c0c0"/><rect x="620" y="579" width="24" height="118" fill="#c0c0c0"/><rect x="621" y="580" width="22" height="116" fill="#000"/><rect x="621" y="630" width="22" height="4" fill="#0000c0"/><rect x="621" y="634" width="22" height="62" fill="#0000c0"/><rect x="621" y="626" width="22" height="1" fill="#c0c0c0"/><rect x="621" y="633" width="22" height="1" fill="#c0c0c0"/><rect x="643" y="579" width="24" height="118" fill="#c0c0c0"/><rect x="644" y="580" width="22" height="116" fill="#000"/><rect x="644" y="610" width="22" height="3" fill="#00c000"/><rect x="644" y="613" width="22" height="83" fill="#00c000"/><rect x="644" y="609" width="22" height="1" fill="#c0c0c0"/><rect x="644" y="612" width="22" height="1" fill="#c0c0c0"/><rect x="666" y="579" width="24" height="118" fill="#c0c0c0"/><rect x="667" y="580" width="22" height="116" fill="#000"/><rect x="667" y="594" width="22" height="102" fill="#00c000"/><rect x="667" y="593" width="22" height="1" fill="#c0c0c0"/><rect x="689" y="579" width="25" height="118" fill="#c0c0c0"/><rect x="690" y="580" width="23" height="116" fill="#000"/><rect x="690" y="598" width="23" height="98" fill="#00c000"/><rect x="690" y="597" width="23" height="1" fill="#c0c0c0"/><rect x="713" y="579" width="24" height="118" fill="#c0c0c0"/><rect x="714" y="580" width="22" height="116" fill="#000"/><rect x="714" y="587" width="22" height="109" fill="#0000c0"/><rect x="714" y="586" width="22" height="1" fill="#c0c0c0"/><rect x="736" y="579" width="24" height="118" fill="#c0c0c0"/><rect x="737" y="580" width="22" height="116" fill="#000"/><rect x="737" y="614" width="22" height="82" fill="#0000c0"/><rect x="737" y="612" width="22" height="1" fill="#c0c0c0"/><rect x="759" y="579" width="24" height="118" fill="#c0c0c0"/><rect x="760" y="580" width="22" height="116" fill="#000"/><rect x="760" y="617" width="22" height="79" fill="#0000c0"/><rect x="760" y="616" width="22" height="1" fill="#c0c0c0"/><rect x="782" y="579" width="25" height="118" fill="#c0c0c0"/><rect x="783" y="580" width="23" height="116" fill="#000"/><rect x="783" y="615" width="23" height="81" fill="#0000c0"/><rect x="783" y="614" width="23" height="1" fill="#c0c0c0"/><g stroke="#d0d0d0" stroke-dasharray="3 3" stroke-width="1"><line x1="505" y1="686.5" x2="808" y2="686.5"/><line x1="505" y1="662.5" x2="808" y2="662.5"/><line x1="505" y1="639.5" x2="808" y2="639.5"/><line x1="505" y1="615.5" x2="808" y2="615.5"/><line x1="505" y1="591.5" x2="808" y2="591.5"/></g></svg><div class="a" style="left:496.5px;top:684px;width:40px;text-align:center;font:12px/12px 'Liberation Sans',sans-serif;color:#000;transform:scaleX(0.87)">46</div><div class="a" style="left:496.0px;top:697px;width:40px;text-align:center;font:13px/14px 'Liberation Sans',sans-serif;color:#e0e0e0;transform:scaleX(0.8)">G19</div><div class="a" style="left:519.5px;top:684px;width:40px;text-align:center;font:12px/12px 'Liberation Sans',sans-serif;color:#000;transform:scaleX(0.87)">47</div><div class="a" style="left:519.0px;top:697px;width:40px;text-align:center;font:13px/14px 'Liberation Sans',sans-serif;color:#e0e0e0;transform:scaleX(0.8)">G20</div><div class="a" style="left:542.5px;top:684px;width:40px;text-align:center;font:12px/12px 'Liberation Sans',sans-serif;color:#000;transform:scaleX(0.87)">41</div><div class="a" style="left:542.0px;top:697px;width:40px;text-align:center;font:13px/14px 'Liberation Sans',sans-serif;color:#e0e0e0;transform:scaleX(0.8)">G22</div><div class="a" style="left:565.5px;top:684px;width:40px;text-align:center;font:12px/12px 'Liberation Sans',sans-serif;color:#000;transform:scaleX(0.87)">51</div><div class="a" style="left:565.0px;top:697px;width:40px;text-align:center;font:13px/14px 'Liberation Sans',sans-serif;color:#e0e0e0;transform:scaleX(0.8)">G32</div><div class="a" style="left:589.0px;top:684px;width:40px;text-align:center;font:12px/12px 'Liberation Sans',sans-serif;color:#000;transform:scaleX(0.87)">42</div><div class="a" style="left:588.5px;top:697px;width:40px;text-align:center;font:13px/14px 'Liberation Sans',sans-serif;color:#e0e0e0;transform:scaleX(0.8)">G28</div><div class="a" style="left:612.5px;top:684px;width:40px;text-align:center;font:12px/12px 'Liberation Sans',sans-serif;color:#000;transform:scaleX(0.87)">33</div><div class="a" style="left:612.0px;top:697px;width:40px;text-align:center;font:13px/14px 'Liberation Sans',sans-serif;color:#e0e0e0;transform:scaleX(0.8)">G3</div><div class="a" style="left:635.5px;top:684px;width:40px;text-align:center;font:12px/12px 'Liberation Sans',sans-serif;color:#000;transform:scaleX(0.87)">42</div><div class="a" style="left:635.0px;top:697px;width:40px;text-align:center;font:13px/14px 'Liberation Sans',sans-serif;color:#e0e0e0;transform:scaleX(0.8)">G17</div><div class="a" style="left:658.5px;top:684px;width:40px;text-align:center;font:12px/12px 'Liberation Sans',sans-serif;color:#000;transform:scaleX(0.87)">49</div><div class="a" style="left:658.0px;top:697px;width:40px;text-align:center;font:13px/14px 'Liberation Sans',sans-serif;color:#e0e0e0;transform:scaleX(0.8)">G11</div><div class="a" style="left:682.0px;top:684px;width:40px;text-align:center;font:12px/12px 'Liberation Sans',sans-serif;color:#000;transform:scaleX(0.87)">47</div><div class="a" style="left:681.5px;top:697px;width:40px;text-align:center;font:13px/14px 'Liberation Sans',sans-serif;color:#e0e0e0;transform:scaleX(0.8)">G14</div><div class="a" style="left:705.5px;top:684px;width:40px;text-align:center;font:12px/12px 'Liberation Sans',sans-serif;color:#000;transform:scaleX(0.87)">52</div><div class="a" style="left:705.0px;top:697px;width:40px;text-align:center;font:13px/14px 'Liberation Sans',sans-serif;color:#e0e0e0;transform:scaleX(0.8)">G1</div><div class="a" style="left:728.5px;top:684px;width:40px;text-align:center;font:12px/12px 'Liberation Sans',sans-serif;color:#000;transform:scaleX(0.87)">40</div><div class="a" style="left:728.0px;top:697px;width:40px;text-align:center;font:13px/14px 'Liberation Sans',sans-serif;color:#e0e0e0;transform:scaleX(0.8)">G9</div><div class="a" style="left:751.5px;top:684px;width:40px;text-align:center;font:12px/12px 'Liberation Sans',sans-serif;color:#000;transform:scaleX(0.87)">39</div><div class="a" style="left:751.0px;top:697px;width:40px;text-align:center;font:13px/14px 'Liberation Sans',sans-serif;color:#e0e0e0;transform:scaleX(0.8)">S120</div><div class="a" style="left:775.0px;top:684px;width:40px;text-align:center;font:12px/12px 'Liberation Sans',sans-serif;color:#000;transform:scaleX(0.87)">40</div><div class="a" style="left:774.5px;top:697px;width:40px;text-align:center;font:13px/14px 'Liberation Sans',sans-serif;color:#e0e0e0;transform:scaleX(0.8)">S124</div><div class="a" style="left:809px;top:680.5px;font:12px/13px 'Liberation Sans',sans-serif;color:#e0e0e0;transform:scaleX(0.87);transform-origin:0 0">10</div><div class="a" style="left:809px;top:656.5px;font:12px/13px 'Liberation Sans',sans-serif;color:#e0e0e0;transform:scaleX(0.87);transform-origin:0 0">20</div><div class="a" style="left:809px;top:633.5px;font:12px/13px 'Liberation Sans',sans-serif;color:#e0e0e0;transform:scaleX(0.87);transform-origin:0 0">30</div><div class="a" style="left:809px;top:609.5px;font:12px/13px 'Liberation Sans',sans-serif;color:#e0e0e0;transform:scaleX(0.87);transform-origin:0 0">40</div><div class="a" style="left:809px;top:585.5px;font:12px/13px 'Liberation Sans',sans-serif;color:#e0e0e0;transform:scaleX(0.87);transform-origin:0 0">50</div><div class="a" style="left:807px;top:697px;font:12px/13px 'Liberation Sans',sans-serif;color:#e0e0e0;transform:scaleX(0.87);transform-origin:0 0">dB</div><div class="a" style="left:838px;top:158px;font:12px/13px 'Liberation Sans',sans-serif;color:#d8d8d8;letter-spacing:-0.4px;white-space:nowrap">Longitude</div><div class="a" style="left:891px;top:156px;width:123px;height:12px;background:#404040"></div><div class="a" style="left:891px;top:157px;width:123px;text-align:right;font:12px/13px 'Liberation Sans',sans-serif;color:#e0e0e0;letter-spacing:-0.5px;white-space:nowrap">12.702518 °</div><div class="a" style="left:838px;top:171px;font:12px/13px 'Liberation Sans',sans-serif;color:#d8d8d8;letter-spacing:-0.4px;white-space:nowrap">Latitude</div><div class="a" style="left:891px;top:169px;width:123px;height:12px;background:#404040"></div><div class="a" style="left:891px;top:170px;width:123px;text-align:right;font:12px/13px 'Liberation Sans',sans-serif;color:#e0e0e0;letter-spacing:-0.5px;white-space:nowrap">51.221483 °</div><div class="a" style="left:838px;top:184px;font:12px/13px 'Liberation Sans',sans-serif;color:#d8d8d8;letter-spacing:-0.4px;white-space:nowrap">Altitude</div><div class="a" style="left:891px;top:182px;width:123px;height:12px;background:#404040"></div><div class="a" style="left:891px;top:183px;width:123px;text-align:right;font:12px/13px 'Liberation Sans',sans-serif;color:#e0e0e0;letter-spacing:-0.5px;white-space:nowrap">203.60 m</div><div class="a" style="left:838px;top:197px;font:12px/13px 'Liberation Sans',sans-serif;color:#d8d8d8;letter-spacing:-0.4px;white-space:nowrap">TTFF</div><div class="a" style="left:891px;top:195px;width:123px;height:12px;background:#404040"></div><div class="a" style="left:838px;top:210px;font:12px/13px 'Liberation Sans',sans-serif;color:#d8d8d8;letter-spacing:-0.4px;white-space:nowrap">Fix Mode</div><div class="a" style="left:891px;top:208px;width:123px;height:12px;background:#404040"></div><div class="a" style="left:891px;top:209px;width:123px;text-align:right;font:12px/13px 'Liberation Sans',sans-serif;color:#00ff00;letter-spacing:-0.5px;white-space:nowrap">3D/DGPS</div><div class="a" style="left:838px;top:223px;font:12px/13px 'Liberation Sans',sans-serif;color:#d8d8d8;letter-spacing:-0.4px;white-space:nowrap">3D Acc.</div><div class="a" style="left:891px;top:221px;width:123px;height:12px;background:#404040"></div><div class="a" style="left:838px;top:236px;font:12px/13px 'Liberation Sans',sans-serif;color:#d8d8d8;letter-spacing:-0.4px;white-space:nowrap">2D Acc.</div><div class="a" style="left:891px;top:234px;width:123px;height:12px;background:#404040"></div><div class="a" style="left:838px;top:249px;font:12px/13px 'Liberation Sans',sans-serif;color:#d8d8d8;letter-spacing:-0.4px;white-space:nowrap">PDOP</div><div class="a" style="left:891px;top:247px;width:123px;height:12px;background:#404040"></div><div class="a" style="left:838px;top:262px;font:12px/13px 'Liberation Sans',sans-serif;color:#d8d8d8;letter-spacing:-0.4px;white-space:nowrap">HDOP</div><div class="a" style="left:891px;top:260px;width:123px;height:12px;background:#404040"></div><div class="a" style="left:838px;top:275px;font:12px/13px 'Liberation Sans',sans-serif;color:#d8d8d8;letter-spacing:-0.4px;white-space:nowrap">Satellites</div><div class="a" style="left:892px;top:248px;font:12px/13px 'Liberation Sans',sans-serif;color:#e0e0e0">0</div><div class="a" style="left:915px;top:247px;width:3px;height:12px;background:#00c000"></div><div class="a" style="left:918px;top:248px;font:12px/13px 'Liberation Sans',sans-serif;color:#e0e0e0;letter-spacing:-0.4px">2.0</div><div class="a" style="left:991px;top:248px;width:23px;text-align:right;font:12px/13px 'Liberation Sans',sans-serif;color:#e0e0e0;letter-spacing:-0.4px">10</div><div class="a" style="left:892px;top:261px;font:12px/13px 'Liberation Sans',sans-serif;color:#e0e0e0">0</div><div class="a" style="left:903px;top:260px;width:3px;height:12px;background:#00c000"></div><div class="a" style="left:906px;top:261px;font:12px/13px 'Liberation Sans',sans-serif;color:#e0e0e0;letter-spacing:-0.4px">1.1</div><div class="a" style="left:991px;top:261px;width:23px;text-align:right;font:12px/13px 'Liberation Sans',sans-serif;color:#e0e0e0;letter-spacing:-0.4px">10</div><div class="a" style="left:891px;top:274px;width:8px;height:11px;background:#00c000"></div><div class="a" style="left:900px;top:274px;width:8px;height:11px;background:#00c000"></div><div class="a" style="left:909px;top:274px;width:8px;height:11px;background:#00c000"></div><div class="a" style="left:918px;top:274px;width:8px;height:11px;background:#00c000"></div><div class="a" style="left:929px;top:274px;width:8px;height:11px;background:#00c000"></div><div class="a" style="left:938px;top:274px;width:8px;height:11px;background:#0000c0"></div><div class="a" style="left:947px;top:274px;width:8px;height:11px;background:#00c000"></div><div class="a" style="left:956px;top:274px;width:8px;height:11px;background:#00c000"></div><div class="a" style="left:967px;top:274px;width:8px;height:11px;background:#00c000"></div><div class="a" style="left:976px;top:274px;width:8px;height:11px;background:#0000c0"></div><div class="a" style="left:985px;top:274px;width:8px;height:11px;background:#0000c0"></div><div class="a" style="left:994px;top:274px;width:8px;height:11px;background:#0000c0"></div><div class="a" style="left:1005px;top:274px;width:8px;height:11px;background:#0000c0"></div><svg width="1024" height="768"><circle cx="926.5" cy="629.5" r="74" fill="none" stroke="#c8c8c8" stroke-width="1" shape-rendering="crispEdges"/><circle cx="926.5" cy="629.5" r="37" fill="none" stroke="#c8c8c8" stroke-width="1" shape-rendering="crispEdges"/></svg><div class="a" style="left:922px;top:547px;font:12px/12px 'Liberation Sans',sans-serif;color:#c8c8c8">N</div><div class="a" style="left:922px;top:697px;font:12px/12px 'Liberation Sans',sans-serif;color:#c8c8c8">S</div><div class="a" style="left:845px;top:623px;font:12px/12px 'Liberation Sans',sans-serif;color:#c8c8c8">W</div><div class="a" style="left:997px;top:623px;font:12px/12px 'Liberation Sans',sans-serif;color:#c8c8c8">E</div><div class="a" style="left:920.5px;top:666.5px;width:21px;height:13px;border-radius:50%;background:#00c800"></div><div class="a" style="left:911px;top:667px;width:40px;text-align:center;font:11px/12px 'Liberation Sans',sans-serif;color:#fff;letter-spacing:-0.5px">G19</div><div class="a" style="left:924.5px;top:550.5px;width:21px;height:13px;border-radius:50%;background:#0000c8"></div><div class="a" style="left:915px;top:551px;width:40px;text-align:center;font:11px/12px 'Liberation Sans',sans-serif;color:#fff;letter-spacing:-0.5px">G9</div><div class="a" style="left:875.0px;top:574.0px;width:21px;height:13px;border-radius:50%;background:#00c800"></div><div class="a" style="left:865.5px;top:574.5px;width:40px;text-align:center;font:11px/12px 'Liberation Sans',sans-serif;color:#fff;letter-spacing:-0.5px">G17</div><div class="a" style="left:861.0px;top:602.0px;width:21px;height:13px;border-radius:50%;background:#00c800"></div><div class="a" style="left:851.5px;top:602.5px;width:40px;text-align:center;font:11px/12px 'Liberation Sans',sans-serif;color:#fff;letter-spacing:-0.5px">G28</div><div class="a" style="left:969.0px;top:597.0px;width:21px;height:13px;border-radius:50%;background:#00c800"></div><div class="a" style="left:959.5px;top:597.5px;width:40px;text-align:center;font:11px/12px 'Liberation Sans',sans-serif;color:#fff;letter-spacing:-0.5px">G22</div><div class="a" style="left:953.0px;top:609.0px;width:21px;height:13px;border-radius:50%;background:#00c800"></div><div class="a" style="left:943.5px;top:609.5px;width:40px;text-align:center;font:11px/12px 'Liberation Sans',sans-serif;color:#fff;letter-spacing:-0.5px">G14</div><div class="a" style="left:898.0px;top:615.0px;width:21px;height:13px;border-radius:50%;background:#0000c8"></div><div class="a" style="left:888.5px;top:615.5px;width:40px;text-align:center;font:11px/12px 'Liberation Sans',sans-serif;color:#fff;letter-spacing:-0.5px">G1</div><div class="a" style="left:911.0px;top:629.0px;width:21px;height:13px;border-radius:50%;background:#00c800"></div><div class="a" style="left:901.5px;top:629.5px;width:40px;text-align:center;font:11px/12px 'Liberation Sans',sans-serif;color:#fff;letter-spacing:-0.5px">G11</div><div class="a" style="left:900.0px;top:637.0px;width:21px;height:13px;border-radius:50%;background:#00c800"></div><div class="a" style="left:890.5px;top:637.5px;width:40px;text-align:center;font:11px/12px 'Liberation Sans',sans-serif;color:#fff;letter-spacing:-0.5px">G32</div><div class="a" style="left:877.0px;top:645.0px;width:21px;height:13px;border-radius:50%;background:#00c800"></div><div class="a" style="left:867.5px;top:645.5px;width:40px;text-align:center;font:11px/12px 'Liberation Sans',sans-serif;color:#fff;letter-spacing:-0.5px">G20</div><div class="a" style="left:886.5px;top:667.0px;width:21px;height:13px;border-radius:50%;background:#0000c8"></div><div class="a" style="left:877px;top:667.5px;width:40px;text-align:center;font:11px/12px 'Liberation Sans',sans-serif;color:#fff;letter-spacing:-0.5px">S120</div><div class="a" style="left:926.5px;top:671.0px;width:21px;height:13px;border-radius:50%;background:#0000c8"></div><div class="a" style="left:917px;top:671.5px;width:40px;text-align:center;font:11px/12px 'Liberation Sans',sans-serif;color:#fff;letter-spacing:-0.5px">S124</div><div class="a" style="left:934.0px;top:693.0px;width:21px;height:13px;border-radius:50%;background:#0000c8"></div><div class="a" style="left:924.5px;top:693.5px;width:40px;text-align:center;font:11px/12px 'Liberation Sans',sans-serif;color:#fff;letter-spacing:-0.5px">G3</div><svg width="1024" height="768"><path d="M3.5 706.5h12v8h-12z" fill="#fff" stroke="#000"/><path d="M5 709.5h9M5 711.5h9" stroke="#000"/><path d="M4 706l5-4l6 4z" fill="#c0c0c0" stroke="#000" stroke-width="1"/><path d="M9 703l7-2" stroke="#808080" stroke-width="2"/><rect x="17" y="701" width="2" height="6" fill="#000080"/><rect x="25" y="699" width="1" height="18" fill="#a0a0a0"/><rect x="26" y="699" width="1" height="18" fill="#fff"/><path d="M40.5 701v14M33 708.5h15" stroke="#000" stroke-width="1.5"/><path d="M40.5 700l-3 3h6zM40.5 716l-3-3h6zM33 708.5l3-3v6zM48 708.5l-3-3v6z" fill="#000"/><rect x="54" y="699" width="1" height="18" fill="#a0a0a0"/><rect x="55" y="699" width="1" height="18" fill="#fff"/><rect x="58.5" y="697.5" width="21" height="20" fill="#f6f6f6" stroke="#fff"/><path d="M58.5 718V697.5H80" fill="none" stroke="#a0a0a0"/><path d="M77 702l-5 3l-5 3q0 3 4 4l3 1" fill="none" stroke="#00ff00" stroke-width="1.3"/><rect x="74" y="712" width="3" height="3" fill="#ffff00"/><path d="M84 704.5h17M84 711.5h17M88.5 700v16M95.5 700v16" stroke="#ff00ff" stroke-width="1"/><rect x="91" y="706" width="3" height="3" fill="#e0e000"/><path d="M481 729.5h2M494 729.5h2" stroke="#000" stroke-width="2"/><rect x="483" y="725" width="5" height="9" rx="2" fill="#000"/><rect x="489" y="725" width="5" height="9" rx="2" fill="#000"/><rect x="485" y="727" width="2" height="5" fill="#fff"/><rect x="490" y="727" width="2" height="5" fill="#fff"/><rect x="683" y="723" width="14" height="14" fill="#000"/><rect x="684" y="724" width="12" height="12" fill="#808000"/><rect x="686" y="724" width="8" height="5" fill="#e0e0e0"/><rect x="686" y="731" width="8" height="5" fill="#000"/><rect x="691" y="732" width="2" height="3" fill="#e0e0e0"/><rect x="1009" y="724" width="2" height="3" fill="#a8a8a8" transform="rotate(0 1010 729)"/><rect x="1009" y="724" width="2" height="3" fill="#a8a8a8" transform="rotate(45 1010 729)"/><rect x="1009" y="724" width="2" height="3" fill="#a8a8a8" transform="rotate(90 1010 729)"/><rect x="1009" y="724" width="2" height="3" fill="#a8a8a8" transform="rotate(135 1010 729)"/><rect x="1009" y="724" width="2" height="3" fill="#a8a8a8" transform="rotate(180 1010 729)"/><rect x="1009" y="724" width="2" height="3" fill="#a8a8a8" transform="rotate(225 1010 729)"/><rect x="1009" y="724" width="2" height="3" fill="#a8a8a8" transform="rotate(270 1010 729)"/><rect x="1009" y="724" width="2" height="3" fill="#a8a8a8" transform="rotate(315 1010 729)"/><circle cx="1010" cy="729" r="4" fill="#a0a0a0"/><circle cx="1010" cy="729" r="1.5" fill="#808080"/></svg><div class="a" style="left:0;top:738px;width:1024px;height:30px;background:linear-gradient(#1c232b 0%,#131920 45%,#0c1015 100%)"></div>
<div class="a" style="left:0;top:739px;width:1024px;height:1px;background:#46505c"></div><div class="a" style="left:60px;top:739px;width:38px;height:29px;border:1px solid #7a7f85;border-radius:3px;background:linear-gradient(160deg,#5c6268 0%,#33383e 40%,#202429 55%,#25292e 100%)"></div><div class="a" style="left:152px;top:739px;width:38px;height:29px;border:1px solid #7a7f85;border-radius:3px;background:linear-gradient(160deg,#5c6268 0%,#33383e 40%,#202429 55%,#25292e 100%)"></div><div class="a" style="left:198px;top:739px;width:43px;height:29px;border:1px solid #7a7f85;border-radius:3px;background:linear-gradient(160deg,#5c6268 0%,#33383e 40%,#202429 55%,#25292e 100%)"></div><div class="a" style="left:244px;top:739px;width:43px;height:29px;border:1px solid #d8d8d8;border-radius:3px;background:linear-gradient(160deg,#a8acb0 0%,#6c7176 45%,#5a5f64 55%,#6a6e72 100%)"></div><div class="a" style="left:290px;top:739px;width:43px;height:29px;border:1px solid #7a7f85;border-radius:3px;background:linear-gradient(160deg,#5c6268 0%,#33383e 40%,#202429 55%,#25292e 100%)"></div><div class="a" style="left:98px;top:739px;width:3px;height:29px;border:1px solid #5a5f65;border-radius:2px;background:#25292e"></div><div class="a" style="left:190px;top:739px;width:3px;height:29px;border:1px solid #5a5f65;border-radius:2px;background:#25292e"></div><svg width="1024" height="768"><defs><radialGradient id="orb" cx="50%" cy="35%" r="60%"><stop offset="0" stop-color="#7fb4e0"/><stop offset="0.5" stop-color="#2d6aa8"/><stop offset="1" stop-color="#0b2e5a"/></radialGradient></defs><circle cx="27" cy="753" r="18" fill="url(#orb)" stroke="#1b3350"/><path d="M18 748q4-4 9-1l-2 6q-4-3-9 1z" fill="#f0502a"/><path d="M28 747q4 2 9-1l-2 7q-4 2-9-1z" fill="#7fc040"/><path d="M16 754q4-3 9 0l-2 6q-4-3-9 0z" fill="#2aa0f0"/><path d="M26 754q4 2 9-1l-2 7q-5 2-9-1z" fill="#f8c020"/><rect x="70" y="748" width="16" height="12" fill="#f2d27a"/><rect x="70" y="747" width="7" height="3" fill="#e8c060"/><path d="M73 760v-5q5-3 10 0v5h-3v-3h-4v3z" fill="#3aa0e0"/><rect x="119" y="746" width="14" height="15" fill="#fff" stroke="#888"/><rect x="120" y="752" width="12" height="8" fill="#40b040"/><path d="M128 758l8-10" stroke="#f0a020" stroke-width="2"/><path d="M164.5 752.5H176A6 6 0 1 0 174 757.5" fill="none" stroke="#2a9ae0" stroke-width="3"/><path d="M162 761q-2-3 4-9t12-7q3 1-1 5" fill="none" stroke="#f0c020" stroke-width="1.5"/><rect x="211" y="745" width="14" height="9" fill="#d0d8e8" stroke="#808080"/><rect x="212" y="753" width="16" height="8" rx="1" fill="#d02020"/><rect x="215" y="756" width="2" height="2" fill="#fff"/><rect x="222" y="756" width="2" height="2" fill="#fff"/><circle cx="265" cy="753" r="8" fill="#ff0000"/><rect x="263" y="749" width="2" height="2" fill="#fff"/><path d="M266 752v4h3v-4" stroke="#fff" stroke-width="2" fill="none"/><circle cx="311" cy="753" r="7.5" fill="#e07010"/><circle cx="313" cy="751" r="4" fill="#2a70c0"/><path d="M305 753q2 6 8 5" stroke="#ffa020" stroke-width="2" fill="none"/><path d="M830 756l4-4l4 4z" fill="#fff"/><rect x="854" y="757" width="2" height="2" fill="#fff"/><rect x="857" y="755" width="2" height="4" fill="#fff"/><rect x="860" y="753" width="2" height="6" fill="#fff"/><rect x="863" y="751" width="2" height="8" fill="#777"/><rect x="866" y="749" width="2" height="10" fill="#777"/><rect x="882" y="747" width="7" height="12" rx="1" fill="none" stroke="#fff" stroke-width="1.3"/><rect x="884" y="745" width="3" height="2" fill="#fff"/><path d="M903 750h3l4-4v14l-4-4h-3z" fill="#d0d0d0"/><circle cx="913" cy="756" r="4" fill="#e02020" stroke="#fff"/><path d="M911 754l4 4" stroke="#fff" stroke-width="1.3"/><rect x="1001.5" y="739.5" width="22" height="28" fill="#1a2028" stroke="#7a8088"/><path d="M1003 755q8-8 20-9v-5h-20z" fill="#3a4048" opacity="0.6"/></svg><div class="a" style="left:801px;top:743px;font:12px/14px 'Liberation Sans',sans-serif;color:#e8e8e8">DE</div><div class="a" style="left:948px;top:746px;font:12px/14px 'Liberation Sans',sans-serif;color:#f0f0f0">20:06</div></body></html>
